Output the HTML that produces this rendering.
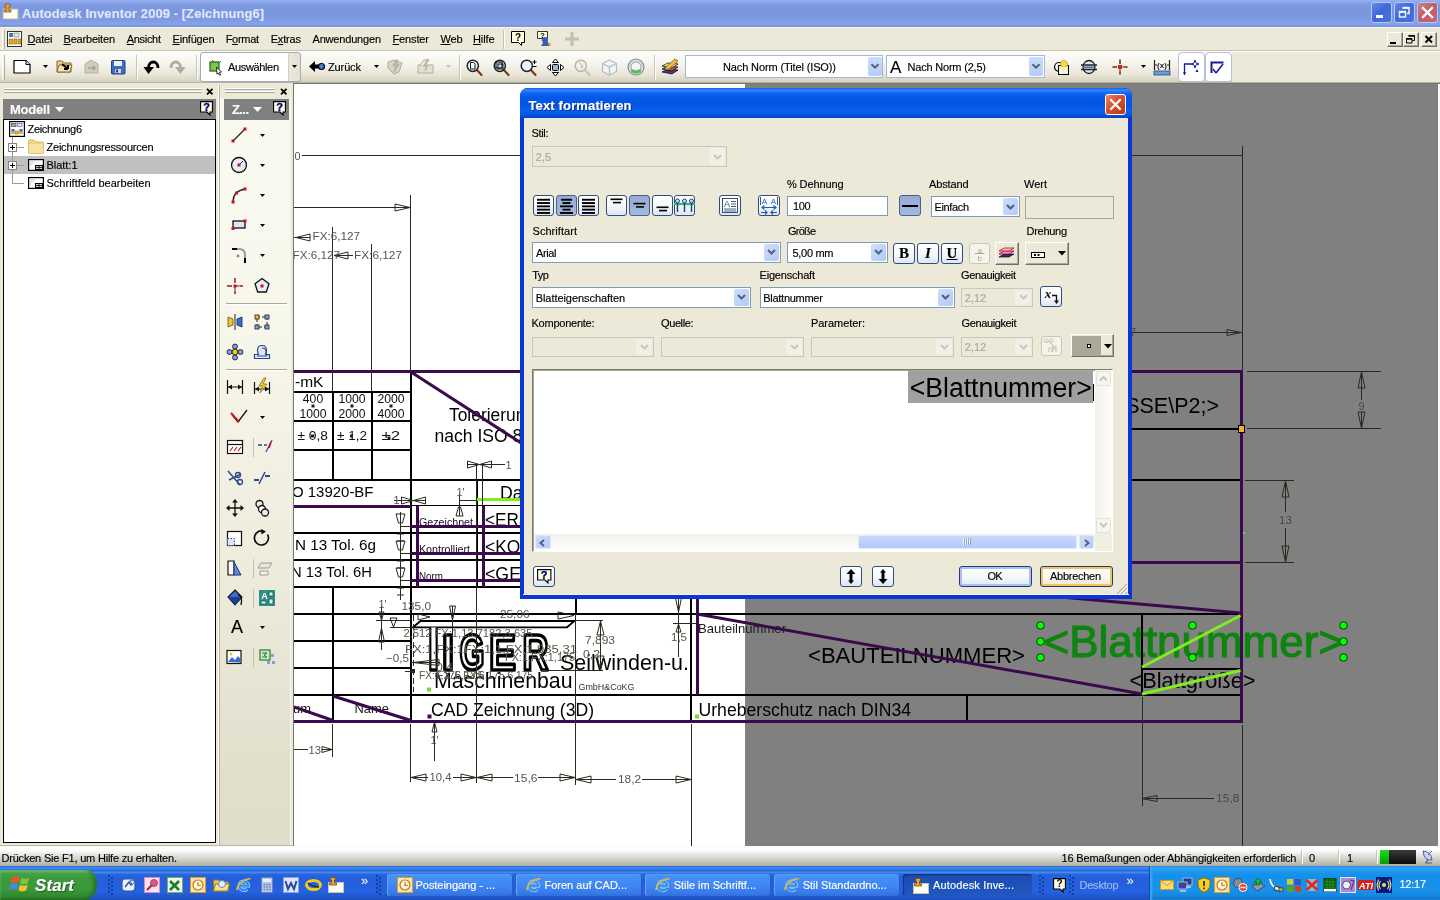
<!DOCTYPE html>
<html lang="de"><head><meta charset="utf-8"><title>Autodesk Inventor 2009 - [Zeichnung6]</title>
<style>
html,body{margin:0;padding:0;}
body{width:1440px;height:900px;overflow:hidden;background:#ece9d8;position:relative;font-family:"Liberation Sans",sans-serif;font-size:11px;}
div,span,svg{position:absolute;display:block;}
#root{left:0;top:0;width:1440px;height:900px;overflow:hidden;will-change:transform;}
.t{white-space:nowrap;-webkit-text-stroke:.15px currentColor;}
u{text-decoration:underline;text-underline-offset:1px;}
svg{overflow:visible;}
svg text{font-family:"Liberation Sans",sans-serif;}
</style></head>
<body>
<div id="root">
<!-- chrome -->
<div style="left:0px;top:0px;width:1440px;height:27px;background:linear-gradient(#98b3ee 0,#8aa6ea 2px,#7b98e1 5px,#7a96df 12px,#7e9ae3 20px,#86a2e9 24px,#7b96dc 26px,#7b96dc 27px);"></div>
<svg style="left:2px;top:3px;" width="18" height="18" viewBox="0 0 18 18"><rect x="1" y="6" width="15" height="10" fill="#fdfdf5" stroke="#b9b39a" stroke-width="1"/><path d="M3 1h5v3h-1v3h2v2h-7v-2h2v-3h-1z" fill="#d9a43c" stroke="#8a5a12" stroke-width=".8"/></svg>
<span class="t" style="left:22px;top:5.30px;font-size:13px;line-height:17px;color:#dfe7fa;letter-spacing:0.061px;font-weight:bold;">Autodesk Inventor 2009 - [Zeichnung6]</span>
<div style="left:1371px;top:2px;width:21px;height:21px;background:linear-gradient(135deg,#6a8ae6 0,#4068d8 45%,#4a74e2 100%);border:1px solid #b4c8f8;border-radius:3px;box-sizing:border-box;"></div>
<div style="left:1394px;top:2px;width:21px;height:21px;background:linear-gradient(135deg,#6a8ae6 0,#4068d8 45%,#4a74e2 100%);border:1px solid #b4c8f8;border-radius:3px;box-sizing:border-box;"></div>
<div style="left:1417px;top:2px;width:21px;height:21px;background:linear-gradient(135deg,#cf8088 0,#bf5c66 50%,#c8687a 100%);border:1px solid #b4c8f8;border-radius:3px;box-sizing:border-box;"></div>
<div style="left:1376px;top:15px;width:7px;height:3px;background:#fff;"></div>
<svg style="left:1394px;top:2px;" width="21" height="21" viewBox="0 0 21 21"><path d="M8.500 5.500h6.500v6h-2" fill="none" stroke="#eef2fd" stroke-width="1.500"/><path d="M8.500 6.200h6.500" stroke="#eef2fd" stroke-width="1.500"/><path d="M5.500 9.500h6v5.500h-6z M5.500 10.200h6" fill="none" stroke="#eef2fd" stroke-width="1.500"/></svg>
<svg style="left:1417px;top:2px;" width="21" height="21" viewBox="0 0 21 21"><path d="M6 6l9 9M15 6l-9 9" stroke="#fff" stroke-width="2.400" stroke-linecap="square"/></svg>
<div style="left:0px;top:27px;width:1440px;height:24px;background:#ece9d8;border-bottom:1px solid #c5c2b2;box-sizing:border-box;"></div>
<div style="left:0px;top:27px;width:1440px;height:1px;background:#f7f6f0;"></div>
<div style="left:2px;top:30px;width:2px;height:19px;border-left:1px solid #fff;border-right:1px solid #b5b19e;box-sizing:border-box;width:3px;"></div>
<svg style="left:7px;top:31px;" width="16" height="16" viewBox="0 0 16 16"><rect x=".5" y=".5" width="14" height="15" fill="#fff" stroke="#333"/><rect x="2" y="2" width="4" height="4" fill="#4a78c8"/><rect x="7" y="2" width="5" height="4" fill="#e8e4d0" stroke="#666" stroke-width=".5"/><rect x="2" y="8" width="4" height="5" fill="#e6a92c" stroke="#7a5a10" stroke-width=".5"/><rect x="7" y="8" width="3" height="5" fill="#e6a92c" stroke="#7a5a10" stroke-width=".5"/><rect x="11" y="8" width="3" height="5" fill="#e6a92c" stroke="#7a5a10" stroke-width=".5"/></svg>
<span class="t" style="left:27.5px;top:31.80px;font-size:11px;line-height:15px;color:#000;letter-spacing:-0.170px;"><u>D</u>atei</span>
<span class="t" style="left:63.5px;top:31.80px;font-size:11px;line-height:15px;color:#000;letter-spacing:-0.190px;"><u>B</u>earbeiten</span>
<span class="t" style="left:126.7px;top:31.80px;font-size:11px;line-height:15px;color:#000;letter-spacing:-0.295px;"><u>A</u>nsicht</span>
<span class="t" style="left:172.5px;top:31.80px;font-size:11px;line-height:15px;color:#000;letter-spacing:-0.204px;"><u>E</u>infügen</span>
<span class="t" style="left:225.7px;top:31.80px;font-size:11px;line-height:15px;color:#000;letter-spacing:-0.307px;">F<u>o</u>rmat</span>
<span class="t" style="left:270.7px;top:31.80px;font-size:11px;line-height:15px;color:#000;letter-spacing:-0.175px;">E<u>x</u>tras</span>
<span class="t" style="left:312.5px;top:31.80px;font-size:11px;line-height:15px;color:#000;letter-spacing:-0.184px;">Anwendun<u>g</u>en</span>
<span class="t" style="left:392.5px;top:31.80px;font-size:11px;line-height:15px;color:#000;letter-spacing:-0.132px;"><u>F</u>enster</span>
<span class="t" style="left:440.5px;top:31.80px;font-size:11px;line-height:15px;color:#000;letter-spacing:-0.210px;"><u>W</u>eb</span>
<span class="t" style="left:473px;top:31.80px;font-size:11px;line-height:15px;color:#000;letter-spacing:-0.126px;"><u>H</u>ilfe</span>
<div style="left:503px;top:30px;width:1px;height:19px;background:#c5c2b2;border-right:1px solid #fff;"></div>
<svg style="left:510px;top:30px;" width="18" height="18" viewBox="0 0 18 18"><path d="M1.500 1.500h13v11h-3v3l-3-3h-7z" fill="#ffffe1" stroke="#000" stroke-width="1"/><text x="8" y="11" font-size="10" font-weight="bold" text-anchor="middle" font-family="Liberation Sans,sans-serif" fill="#000">?</text></svg>
<svg style="left:536px;top:30px;" width="18" height="18" viewBox="0 0 18 18"><path d="M1.500 1.500h10v7h-10z" fill="#ffffe1" stroke="#333" stroke-width="1"/><text x="6.500" y="8" font-size="8" font-weight="bold" text-anchor="middle" font-family="Liberation Sans,sans-serif" fill="#000">?</text><circle cx="9" cy="10" r="3" fill="#3a5fb0"/><path d="M5 16l3-5 4 1 2 4z" fill="#3a5fb0"/><circle cx="14" cy="14" r="1.500" fill="#f0c040"/></svg>
<svg style="left:564px;top:31px;" width="16" height="16" viewBox="0 0 16 16"><path d="M6.500 1h3v5.500h5.500v3h-5.500v5.500h-3v-5.500h-5.500v-3h5.500z" fill="#c3c0b0"/></svg>
<div style="left:1387px;top:32px;width:15.5px;height:14.5px;background:#ece9d8;border:1px solid;border-color:#fff #716f64 #716f64 #fff;box-sizing:border-box;box-shadow:inset -1px -1px 0 #aca899;"></div>
<div style="left:1403px;top:32px;width:15.5px;height:14.5px;background:#ece9d8;border:1px solid;border-color:#fff #716f64 #716f64 #fff;box-sizing:border-box;box-shadow:inset -1px -1px 0 #aca899;"></div>
<div style="left:1421px;top:32px;width:16px;height:14.5px;background:#ece9d8;border:1px solid;border-color:#fff #716f64 #716f64 #fff;box-sizing:border-box;box-shadow:inset -1px -1px 0 #aca899;"></div>
<div style="left:1390px;top:41.5px;width:6px;height:2px;background:#000;"></div>
<svg style="left:1403px;top:32px;" width="16" height="15" viewBox="0 0 16 15"><path d="M5.500 3.500h6v5h-2" fill="none" stroke="#000" stroke-width="1"/><path d="M5.500 4h6" stroke="#000" stroke-width="1.500"/><path d="M3.500 6.500h5.500v4.500h-5.500z" fill="#ece9d8" stroke="#000" stroke-width="1"/><path d="M3.500 7h5.500" stroke="#000" stroke-width="1.500"/></svg>
<svg style="left:1421px;top:32px;" width="16" height="15" viewBox="0 0 16 15"><path d="M4.500 4l6.500 6.500M11 4l-6.500 6.500" stroke="#000" stroke-width="2"/></svg>
<div style="left:0px;top:51px;width:1440px;height:33px;background:#ece9d8;"></div>
<div style="left:0px;top:51px;width:1232px;height:31px;background:linear-gradient(#fdfdfb 0,#f6f5ee 40%,#e8e5d6 78%,#d4d0bb 100%);"></div>
<div style="left:0px;top:82px;width:1440px;height:1px;background:#b5b2a0;"></div>
<div style="left:0px;top:51px;width:1440px;height:1px;background:#fff;"></div>
<div style="left:2px;top:55px;width:3px;height:25px;border-left:1px solid #fff;border-right:1px solid #b5b19e;box-sizing:border-box;"></div>
<!-- toolbar -->
<svg style="left:13px;top:60px;" width="18" height="14" viewBox="0 0 18 14"><path d="M1 .5h12l4 4v8.500h-16z" fill="#fff" stroke="#000" stroke-width="1.200"/><path d="M13 .5v4h4" fill="#d8d8e8" stroke="#000" stroke-width="1"/></svg>
<svg style="left:43px;top:65px;" width="5" height="3" viewBox="0 0 5 3"><path d="M0 0h5l-2.5 3z" fill="#000"/></svg>
<svg style="left:56px;top:58px;" width="18" height="17" viewBox="0 0 18 17"><path d="M1 3h5l2 2h7v9h-14z" fill="#e9cf8d" stroke="#8a6a2a" stroke-width="1"/><path d="M3 7h13l-2 7h-13z" fill="#f4e2ae" stroke="#8a6a2a" stroke-width="1"/><path d="M6 6l6 5m0 0v-4m0 4h-4" stroke="#000" stroke-width="2" fill="none"/></svg>
<svg style="left:84px;top:59px;" width="15" height="15" viewBox="0 0 15 15"><path d="M1 5l6-4 7 4v9h-13z" fill="#cfccbd" stroke="#b4b1a2"/><path d="M4 9h7l-2-2m2 2l-2 2" stroke="#a5a293" stroke-width="1.500" fill="none"/></svg>
<svg style="left:111px;top:60px;" width="15" height="15" viewBox="0 0 15 15"><rect x=".5" y=".5" width="13.500" height="13.500" rx="1" fill="#3b6fc4" stroke="#1f3f86"/><rect x="3" y="1" width="8" height="5" fill="#e9f0fb"/><rect x="3.500" y="8.500" width="7" height="5" fill="#c8d6ee" stroke="#1f3f86" stroke-width=".6"/><rect x="5" y="9.500" width="2" height="3" fill="#1f3f86"/></svg>
<div style="left:136px;top:55px;width:1px;height:25px;background:#c9c5b4;border-right:1px solid #fff;"></div>
<svg style="left:143px;top:59px;" width="17" height="16" viewBox="0 0 17 16"><path d="M15 9c0-8-9.500-8-9.500 0" fill="none" stroke="#000" stroke-width="2.800"/><path d="M.5 8h10.500l-5.500 7z" fill="#000"/></svg>
<svg style="left:169px;top:59px;" width="17" height="16" viewBox="0 0 17 16"><path d="M2 9c0-8 9.500-8 9.500 0" fill="none" stroke="#b0ad9f" stroke-width="2.800"/><path d="M16.500 8h-10.500l5.500 7z" fill="#b0ad9f"/></svg>
<div style="left:196px;top:55px;width:1px;height:25px;background:#c9c5b4;border-right:1px solid #fff;"></div>
<div style="left:200px;top:52px;width:101px;height:30px;background:linear-gradient(90deg,#fff 0,#fff 87px,#eae8dc 88px,#e4e1d4 100%);border:1px solid #a3abba;border-radius:3px;box-sizing:border-box;"></div>
<div style="left:288px;top:54px;width:1px;height:27px;background:#d2cfbf;"></div>
<svg style="left:209px;top:59px;" width="14" height="17" viewBox="0 0 14 17"><rect x="1" y="3" width="9" height="9" fill="#79c94a" stroke="#2b5e12" stroke-width="1.200"/><path d="M3 1l2 2M12 2l-2 2" stroke="#555" stroke-width="1"/><path d="M7.500 8l5 5-2 .3 1.200 2.400-1.200 .6-1.200-2.400-1.300 1.300z" fill="#fff" stroke="#000" stroke-width=".8"/></svg>
<span class="t" style="left:228px;top:59.80px;font-size:11px;line-height:15px;color:#000;letter-spacing:-0.352px;">Auswählen</span>
<svg style="left:292px;top:65px;" width="5" height="3" viewBox="0 0 5 3"><path d="M0 0h5l-2.5 3z" fill="#000"/></svg>
<svg style="left:309px;top:60px;" width="17" height="13" viewBox="0 0 17 13"><path d="M0 6.500l6-5.500v3.500h5v4h-5v3.500z" fill="#000"/><circle cx="12.500" cy="6.500" r="3" fill="#4a7fd8" stroke="#000" stroke-width="1.200"/></svg>
<span class="t" style="left:328px;top:59.80px;font-size:11px;line-height:15px;color:#000;letter-spacing:-0.124px;">Zurück</span>
<svg style="left:374px;top:65px;" width="5" height="3" viewBox="0 0 5 3"><path d="M0 0h5l-2.5 3z" fill="#000"/></svg>
<svg style="left:387px;top:58px;" width="16" height="17" viewBox="0 0 16 17"><path d="M1 4l6-2 8 3-3 9-5 2-6-6z" fill="#d8d5c7" stroke="#aeab9c"/><path d="M9 2l-3 6h3l-2 6 5-8h-3l2-4z" fill="#c2bfb0" stroke="#a3a091" stroke-width=".7"/></svg>
<svg style="left:417px;top:58px;" width="18" height="17" viewBox="0 0 18 17"><path d="M1 7h15v8h-15z" fill="#e4e1d3" stroke="#b1ae9f"/><path d="M3 7l4-5h5l-4 5" fill="#efede3" stroke="#b1ae9f"/><path d="M11 1l-4 7h3l-2 5" fill="none" stroke="#b1ae9f" stroke-width="1.200"/></svg>
<svg style="left:446px;top:65px;" width="5" height="3" viewBox="0 0 5 3"><path d="M0 0h5l-2.5 3z" fill="#c6c3b3"/></svg>
<div style="left:459px;top:55px;width:1px;height:25px;background:#c9c5b4;border-right:1px solid #fff;"></div>
<svg style="left:466px;top:59px;" width="18" height="18" viewBox="0 0 18 18"><path d="M10.500 10.500l5 5.500" stroke="#7a3a1a" stroke-width="2.200" stroke-linecap="round"/><circle cx="6.800" cy="6.800" r="5.600" fill="#e9f1fb" stroke="#222" stroke-width="1.500"/><path d="M4.500 3.500h3l1.500 1.500v5h-4.500z" fill="#fff" stroke="#000" stroke-width=".9"/></svg>
<svg style="left:493px;top:59px;" width="18" height="18" viewBox="0 0 18 18"><path d="M10.500 10.500l5 5.500" stroke="#7a3a1a" stroke-width="2.200" stroke-linecap="round"/><circle cx="6.800" cy="6.800" r="5.600" fill="#e9f1fb" stroke="#222" stroke-width="1.500"/><rect x="3" y="3" width="6" height="6" fill="#cfe0f5" stroke="#000" stroke-width="1"/><rect x="5" y="5" width="5" height="5" fill="none" stroke="#000" stroke-width=".9"/></svg>
<svg style="left:520px;top:59px;" width="18" height="18" viewBox="0 0 18 18"><path d="M10.500 10.500l5 5.500" stroke="#7a3a1a" stroke-width="2.200" stroke-linecap="round"/><circle cx="6.800" cy="6.800" r="5.600" fill="#e9f1fb" stroke="#222" stroke-width="1.500"/><path d="M12.500 3h4m-2-2v4M12.500 7.500h4" stroke="#000" stroke-width="1" fill="none"/></svg>
<svg style="left:547px;top:59px;" width="17" height="17" viewBox="0 0 17 17"><path d="M8.500 0l3 3.500h-6zM8.500 17l3-3.500h-6zM0 8.500l3.500-3v6zM17 8.500l-3.500-3v6z" fill="#fff" stroke="#000" stroke-width="1"/><rect x="5.500" y="5.500" width="6" height="6" rx="1" fill="#9fb7dd" stroke="#000" stroke-width="1"/></svg>
<svg style="left:574px;top:59px;" width="18" height="18" viewBox="0 0 18 18"><path d="M10.500 10.500l5 5.500" stroke="#c9c6b6" stroke-width="2.200" stroke-linecap="round"/><circle cx="6.800" cy="6.800" r="5.600" fill="#f1f0e8" stroke="#b9b6a6" stroke-width="1.500"/><path d="M5 3.500l4 4-2 .2 1 2" fill="none" stroke="#b9b6a6" stroke-width="1"/></svg>
<svg style="left:601px;top:59px;" width="17" height="17" viewBox="0 0 17 17"><path d="M8.500 1l7 3.500v8l-7 3.500-7-3.500v-8z" fill="#f2f4f6" stroke="#b4bcc4" stroke-width="1.200"/><path d="M1.500 4.500l7 3.500 7-3.500M8.500 8v8" fill="none" stroke="#b4bcc4" stroke-width="1.200"/></svg>
<svg style="left:627px;top:58px;" width="18" height="18" viewBox="0 0 18 18"><circle cx="9" cy="9" r="8" fill="#d4d8dc" stroke="#8b9096" stroke-width="1.200"/><circle cx="9" cy="9" r="5" fill="#f6f6f6" stroke="#a0a4a8"/><path d="M3.500 13a7 7 0 0 0 11 0l-2.500-2a4 4 0 0 1-6 0z" fill="#58c05a"/></svg>
<div style="left:654px;top:55px;width:1px;height:25px;background:#c9c5b4;border-right:1px solid #fff;"></div>
<svg style="left:661px;top:58px;" width="18" height="18" viewBox="0 0 18 18"><path d="M1 14l6-3 10 1-6 4z" fill="#3a3f8f" stroke="#111" stroke-width=".8"/><path d="M1 11l6-3 10 1-6 4z" fill="#e04a2a" stroke="#111" stroke-width=".8"/><path d="M1 8l6-3 10 1-6 4z" fill="#f2e9c8" stroke="#111" stroke-width=".8"/><path d="M5 9l9-8 3 2-9 8-4 1z" fill="#f3c23a" stroke="#7a5a10" stroke-width=".8"/></svg>
<div style="left:685px;top:55px;width:198px;height:23px;background:#fff;border:1px solid #a5b7d3;box-sizing:border-box;"></div>
<span class="t" style="left:723px;top:59.80px;font-size:11px;line-height:15px;color:#000;letter-spacing:-0.123px;">Nach Norm (Titel (ISO))</span>
<div style="left:868px;top:57px;width:14px;height:19px;background:linear-gradient(#cbdcfb,#b7cdf6);border-radius:2px;"></div>
<svg style="left:870px;top:63px;" width="10" height="7" viewBox="0 0 10 7"><path d="M1.500 1.200l3.500 3.500 3.500-3.500" fill="none" stroke="#4d6185" stroke-width="2"/></svg>
<div style="left:886px;top:55px;width:159px;height:23px;background:#fff;border:1px solid #a5b7d3;box-sizing:border-box;"></div>
<span class="t" style="left:890px;top:57.30px;font-size:17px;line-height:21px;color:#000;">A</span>
<span class="t" style="left:907.5px;top:59.80px;font-size:11px;line-height:15px;color:#000;letter-spacing:-0.200px;">Nach Norm (2,5)</span>
<div style="left:1029px;top:57px;width:14px;height:19px;background:linear-gradient(#cbdcfb,#b7cdf6);border-radius:2px;"></div>
<svg style="left:1031px;top:63px;" width="10" height="7" viewBox="0 0 10 7"><path d="M1.500 1.200l3.500 3.500 3.500-3.500" fill="none" stroke="#4d6185" stroke-width="2"/></svg>
<svg style="left:1053px;top:59px;" width="17" height="17" viewBox="0 0 17 17"><circle cx="6" cy="8" r="4.500" fill="none" stroke="#000" stroke-width="1.200"/><rect x="5.500" y="6.500" width="10" height="9" fill="#f5f1e0" stroke="#000" stroke-width="1"/><circle cx="11" cy="5" r="3.500" fill="#fbd84a" stroke="#caa21a" stroke-width=".8"/><rect x="9" y="8" width="4" height="3" fill="#fff3b0"/></svg>
<svg style="left:1080px;top:59px;" width="18" height="17" viewBox="0 0 18 17"><ellipse cx="9" cy="8" rx="6" ry="6.500" fill="#dfe4ea" stroke="#222" stroke-width="1.300"/><path d="M1 6h16M1 10.500h16" stroke="#222" stroke-width="1.400"/><path d="M4 8.200h10" stroke="#3a5fb0" stroke-width="1.400"/></svg>
<svg style="left:1111px;top:58px;" width="18" height="18" viewBox="0 0 18 18"><path d="M9 1v16M1 9h16" stroke="#d03020" stroke-width="1" stroke-dasharray="5 2 4 2 5"/><path d="M9 2v4M9 12v4M2 9h4M12 9h4" stroke="#222" stroke-width="1"/><rect x="7" y="7" width="4" height="4" fill="#d81e10"/></svg>
<svg style="left:1141px;top:65px;" width="5" height="3" viewBox="0 0 5 3"><path d="M0 0h5l-2.5 3z" fill="#000"/></svg>
<svg style="left:1153px;top:59px;" width="18" height="17" viewBox="0 0 18 17"><path d="M1.500 1v10M16.500 1v10M4 6h-2.500M14 6h2.500" stroke="#222" stroke-width="1.200"/><text x="9" y="9" font-size="8" font-weight="bold" text-anchor="middle" fill="#222">(x)</text><rect x="1" y="12" width="16" height="4" fill="#6c9bd8" stroke="#27467c" stroke-width=".8"/></svg>
<div style="left:1178px;top:52px;width:27px;height:30px;background:#fff;border:1px solid #b4c0d6;border-radius:4px;box-sizing:border-box;"></div>
<div style="left:1205px;top:52px;width:27px;height:30px;background:#fff;border:1px solid #b4c0d6;border-radius:4px;box-sizing:border-box;"></div>
<svg style="left:1182px;top:59px;" width="18" height="17" viewBox="0 0 18 17"><path d="M2.500 16v-11h7" fill="none" stroke="#1a1aa0" stroke-width="1.300"/><path d="M13 1l1 3 3 1-3 1-1 3-1-3-3-1 3-1z" fill="#fff" stroke="#1a1aa0" stroke-width="1"/><path d="M2.500 16l-1.500-3h3zM15 10l1.500 3h-3z" fill="#1a1aa0"/></svg>
<svg style="left:1209px;top:59px;" width="18" height="17" viewBox="0 0 18 17"><path d="M2.500 14v-10.500h12" fill="none" stroke="#1a1aa0" stroke-width="2"/><path d="M14 5l-7 9M7 14l-3-4" fill="none" stroke="#1a1aa0" stroke-width="1.600"/></svg>
<!-- panels -->
<div style="left:0px;top:83px;width:294px;height:764px;background:#ece9d8;"></div>
<div style="left:4px;top:88px;width:198px;height:2px;border-top:1px solid #fff;border-bottom:1px solid #aca899;box-sizing:border-box;background:#ece9d8;"></div>
<div style="left:4px;top:91px;width:198px;height:2px;border-top:1px solid #fff;border-bottom:1px solid #aca899;box-sizing:border-box;background:#ece9d8;"></div>
<svg style="left:206px;top:88px;" width="8" height="7" viewBox="0 0 8 7"><path d="M1 .8l5.500 5.500M6.500 .8l-5.500 5.500" stroke="#000" stroke-width="1.800"/></svg>
<div style="left:218px;top:85px;width:1px;height:761px;background:#fff;"></div>
<div style="left:219px;top:85px;width:1px;height:761px;background:#b5b2a0;"></div>
<div style="left:3px;top:99px;width:213px;height:21px;background:#808080;"></div>
<span class="t" style="left:10px;top:101.30px;font-size:13px;line-height:17px;color:#fff;letter-spacing:-0.233px;font-weight:bold;">Modell</span>
<svg style="left:55px;top:107px;" width="9" height="5" viewBox="0 0 9 5"><path d="M0 0h9l-4.500 5z" fill="#fff"/></svg>
<svg style="left:199.5px;top:101px;" width="13" height="15" viewBox="0 0 13 15"><path d="M.6 .6h11.800v10.400h-2.400v3l-3-3h-6.400z" fill="#ffffe1" stroke="#000" stroke-width="1.100"/><text x="6.500" y="9.800" font-size="11" font-weight="bold" text-anchor="middle" fill="#00007b" stroke="#00007b" stroke-width=".4">?</text></svg>
<div style="left:3px;top:119px;width:213px;height:724px;background:#fff;border:1px solid #000;box-sizing:border-box;"></div>
<div style="left:4px;top:156px;width:211px;height:18px;background:#c0c0c0;"></div>
<div style="left:12px;top:137px;width:1px;height:46px;background:#9a9a9a;"></div>
<div style="left:12px;top:147px;width:12px;height:1px;background:#9a9a9a;"></div>
<div style="left:12px;top:165px;width:12px;height:1px;background:#9a9a9a;"></div>
<div style="left:12px;top:183px;width:12px;height:1px;background:#9a9a9a;"></div>
<svg style="left:8px;top:142.5px;" width="9" height="9" viewBox="0 0 9 9"><rect x=".5" y=".5" width="8" height="8" fill="#fff" stroke="#848484"/><path d="M2 4.500h5M4.500 2v5" stroke="#000" stroke-width="1"/></svg>
<svg style="left:8px;top:160.5px;" width="9" height="9" viewBox="0 0 9 9"><rect x=".5" y=".5" width="8" height="8" fill="#fff" stroke="#848484"/><path d="M2 4.500h5M4.500 2v5" stroke="#000" stroke-width="1"/></svg>
<svg style="left:9px;top:121px;" width="16" height="16" viewBox="0 0 16 16"><rect x=".6" y=".6" width="14.800" height="14.800" fill="#fff" stroke="#000" stroke-width="1.200"/><rect x="2.500" y="2.500" width="4.500" height="3" fill="#c8a05a" stroke="#3b5c9a" stroke-width=".8"/><rect x="8.500" y="2.500" width="4.500" height="3" fill="#e9e6d6" stroke="#3b5c9a" stroke-width=".6"/><rect x="2.500" y="8" width="3" height="5" fill="#3d6cc0"/><rect x="6.500" y="10" width="3" height="3" fill="#f0b428" stroke="#8a6a10" stroke-width=".5"/><rect x="10.500" y="8" width="3" height="5" fill="#3d6cc0"/><rect x="10.500" y="10.500" width="3" height="2.500" fill="#f0b428"/><rect x="2.500" y="10.500" width="3" height="2.500" fill="#f0b428"/></svg>
<svg style="left:28px;top:139px;" width="16" height="15" viewBox="0 0 16 15"><path d="M.5 2.500q0-1.500 1.500-1.500h4l1.500 2h7q1 0 1 1v9.500q0 1-1 1h-13q-1 0-1-1z" fill="#f0d388" stroke="#d9b964" stroke-width="1"/><path d="M.8 5h14.400v8.500q0 .8-.8 .8h-12.800q-.8 0-.8-.8z" fill="#f7e2a6"/></svg>
<svg style="left:28px;top:159px;" width="16" height="12" viewBox="0 0 16 12"><rect x=".6" y=".6" width="14.800" height="10.800" fill="#fff" stroke="#000" stroke-width="1.200"/><path d="M2 8l6-6h-6z" fill="#dfe6f0"/><rect x="7.500" y="6.500" width="7" height="4" fill="#d8d8d8" stroke="#000" stroke-width="1"/><path d="M7.500 8.500h7M11 6.500v4" stroke="#000" stroke-width=".8"/></svg>
<svg style="left:28px;top:177px;" width="16" height="12" viewBox="0 0 16 12"><rect x=".6" y=".6" width="14.800" height="10.800" fill="#fff" stroke="#000" stroke-width="1.200"/><path d="M2 8l6-6h-6z" fill="#dfe6f0"/><rect x="7.500" y="6.500" width="7" height="4" fill="#d8d8d8" stroke="#000" stroke-width="1"/><path d="M7.500 8.500h7M11 6.500v4" stroke="#000" stroke-width=".8"/></svg>
<span class="t" style="left:27.5px;top:121.80px;font-size:11px;line-height:15px;color:#000;letter-spacing:-0.332px;">Zeichnung6</span>
<span class="t" style="left:46.5px;top:139.80px;font-size:11px;line-height:15px;color:#000;letter-spacing:-0.225px;">Zeichnungsressourcen</span>
<span class="t" style="left:46.5px;top:157.80px;font-size:11px;line-height:15px;color:#000;letter-spacing:-0.031px;">Blatt:1</span>
<span class="t" style="left:46.5px;top:175.80px;font-size:11px;line-height:15px;color:#000;letter-spacing:0.002px;">Schriftfeld bearbeiten</span>
<div style="left:220px;top:85px;width:71px;height:761px;background:linear-gradient(#fbfaf1 0,#f8f7ec 30%,#efedde 60%,#e2dfcd 90%,#e0ddcb 100%);"></div>
<div style="left:220px;top:85px;width:71px;height:14px;background:#ece9d8;"></div>
<div style="left:290px;top:84px;width:3px;height:762px;background:#ece9d8;border-left:1px solid #f4f3ec;box-sizing:border-box;"></div>
<div style="left:225px;top:88px;width:50px;height:2px;border-top:1px solid #fff;border-bottom:1px solid #aca899;box-sizing:border-box;background:#ece9d8;"></div>
<div style="left:225px;top:91px;width:50px;height:2px;border-top:1px solid #fff;border-bottom:1px solid #aca899;box-sizing:border-box;background:#ece9d8;"></div>
<svg style="left:279.5px;top:88px;" width="8" height="7" viewBox="0 0 8 7"><path d="M1 .8l5.500 5.500M6.500 .8l-5.500 5.500" stroke="#000" stroke-width="1.800"/></svg>
<div style="left:224px;top:99px;width:65px;height:21px;background:#808080;"></div>
<span class="t" style="left:232px;top:101.30px;font-size:13px;line-height:17px;color:#fff;letter-spacing:-0.592px;font-weight:bold;">Z...</span>
<svg style="left:253px;top:107px;" width="9" height="5" viewBox="0 0 9 5"><path d="M0 0h9l-4.500 5z" fill="#fff"/></svg>
<svg style="left:272.5px;top:101px;" width="13" height="15" viewBox="0 0 13 15"><path d="M.6 .6h11.800v10.400h-2.400v3l-3-3h-6.400z" fill="#ffffe1" stroke="#000" stroke-width="1.100"/><text x="6.500" y="9.800" font-size="11" font-weight="bold" text-anchor="middle" fill="#00007b" stroke="#00007b" stroke-width=".4">?</text></svg>
<svg style="left:230px;top:126px;" width="18" height="18" viewBox="0 0 18 18"><path d="M3 15l12-12" stroke="#222" stroke-width="1.300"/><rect x="1.5" y="13.5" width="3" height="3" fill="#c8161d"/><rect x="13.5" y="1.5" width="3" height="3" fill="#c8161d"/></svg>
<svg style="left:260px;top:133.5px;" width="5" height="3" viewBox="0 0 5 3"><path d="M0 0h5l-2.5 3z" fill="#000"/></svg>
<svg style="left:230px;top:156px;" width="18" height="18" viewBox="0 0 18 18"><circle cx="9" cy="9" r="7.500" fill="#e7edf8" stroke="#111" stroke-width="1.300"/><path d="M9 9l4-4" stroke="#222" stroke-width="1"/><rect x="7.5" y="7.5" width="3" height="3" fill="#c8161d"/></svg>
<svg style="left:260px;top:163.5px;" width="5" height="3" viewBox="0 0 5 3"><path d="M0 0h5l-2.5 3z" fill="#000"/></svg>
<svg style="left:230px;top:186px;" width="18" height="18" viewBox="0 0 18 18"><path d="M3 16q0-11 12-13" fill="none" stroke="#222" stroke-width="1.300"/><rect x="1.5" y="14.5" width="3" height="3" fill="#c8161d"/><rect x="5" y="5.5" width="3" height="3" fill="#c8161d"/><rect x="13.5" y="1.5" width="3" height="3" fill="#c8161d"/></svg>
<svg style="left:260px;top:193.5px;" width="5" height="3" viewBox="0 0 5 3"><path d="M0 0h5l-2.5 3z" fill="#000"/></svg>
<svg style="left:230px;top:216px;" width="18" height="18" viewBox="0 0 18 18"><rect x="3" y="5" width="12" height="7" fill="#dfe5f3" stroke="#111" stroke-width="1.300"/><rect x="1.5" y="11" width="3" height="3" fill="#c8161d"/><rect x="13.5" y="3.5" width="3" height="3" fill="#c8161d"/></svg>
<svg style="left:260px;top:223.5px;" width="5" height="3" viewBox="0 0 5 3"><path d="M0 0h5l-2.5 3z" fill="#000"/></svg>
<svg style="left:230px;top:246px;" width="18" height="18" viewBox="0 0 18 18"><path d="M2 3h7q6 0 6 6v7" fill="none" stroke="#9a9a9a" stroke-width="2"/><path d="M2 3h5M15 12v5" stroke="#000" stroke-width="2"/><path d="M8 8.500v3M6.500 10h3" stroke="#c8161d" stroke-width=".8"/></svg>
<svg style="left:260px;top:253.5px;" width="5" height="3" viewBox="0 0 5 3"><path d="M0 0h5l-2.5 3z" fill="#000"/></svg>
<svg style="left:226px;top:277px;" width="18" height="18" viewBox="0 0 18 18"><path d="M9 1v16M1 9h16" stroke="#222" stroke-width="1" stroke-dasharray="5 2 4 2 5"/><path d="M9 1v5M9 12v5M1 9h5M12 9h5" stroke="#c8161d" stroke-width="1"/><rect x="7.5" y="7.5" width="3" height="3" fill="#c8161d"/></svg>
<svg style="left:253px;top:277px;" width="18" height="18" viewBox="0 0 18 18"><path d="M9 1.500l7 5.200-2.700 8.300h-8.600l-2.700-8.300z" fill="#e7edf8" stroke="#111" stroke-width="1.300"/><rect x="7.5" y="7.5" width="3" height="3" fill="#c8161d"/></svg>
<div style="left:226px;top:303px;width:61px;height:2px;border-top:1px solid #aca899;border-bottom:1px solid #fff;box-sizing:border-box;"></div>
<svg style="left:226px;top:313px;" width="18" height="18" viewBox="0 0 18 18"><path d="M9 1v16" stroke="#222" stroke-width="1"/><path d="M2 4l5 2v6l-5 2z" fill="#f3c22b" stroke="#6b5310" stroke-width=".8"/><path d="M16 4l-5 2v6l5 2z" fill="#3c6bc7" stroke="#10285e" stroke-width=".8"/></svg>
<svg style="left:253px;top:313px;" width="18" height="18" viewBox="0 0 18 18"><path d="M4 4h10v10h-10z" fill="none" stroke="#222" stroke-width="1" stroke-dasharray="3 2"/><rect x="2" y="2" width="4" height="4" fill="#f3c22b" stroke="#222" stroke-width=".8"/><rect x="12" y="2" width="4" height="4" fill="#7da0dc" stroke="#222" stroke-width=".8"/><rect x="2" y="12" width="4" height="4" fill="#7da0dc" stroke="#222" stroke-width=".8"/><rect x="12" y="12" width="4" height="4" fill="#7da0dc" stroke="#222" stroke-width=".8"/></svg>
<svg style="left:226px;top:343px;" width="18" height="18" viewBox="0 0 18 18"><circle cx="9" cy="9" r="3" fill="#f3c22b" stroke="#222" stroke-width=".9"/><circle cx="9" cy="3.500" r="2.500" fill="#7da0dc" stroke="#222" stroke-width=".9"/><circle cx="9" cy="14.500" r="2.500" fill="#7da0dc" stroke="#222" stroke-width=".9"/><circle cx="3.500" cy="9" r="2.500" fill="#7da0dc" stroke="#222" stroke-width=".9"/><circle cx="14.500" cy="9" r="2.500" fill="#7da0dc" stroke="#222" stroke-width=".9"/></svg>
<svg style="left:253px;top:343px;" width="18" height="18" viewBox="0 0 18 18"><path d="M1.500 15.500v-4h4q-1-2-1-4 0-5 4.500-5t4.500 5q0 2-1 4h4v4z" fill="#e0e8f6" stroke="#2a4a8c" stroke-width="1.200"/><path d="M4 13h10q-1-2.500-1-5 0-3-4-3" fill="none" stroke="#2a4a8c" stroke-width="1"/></svg>
<div style="left:226px;top:369px;width:61px;height:2px;border-top:1px solid #aca899;border-bottom:1px solid #fff;box-sizing:border-box;"></div>
<svg style="left:226px;top:378px;" width="18" height="18" viewBox="0 0 18 18"><path d="M1.500 2v14M16.500 2v14M2 9h14" stroke="#111" stroke-width="1.200"/><path d="M2 9l4-2.500v5zM16 9l-4-2.500v5z" fill="#111"/></svg>
<svg style="left:253px;top:378px;" width="18" height="18" viewBox="0 0 18 18"><path d="M1.500 4v12M16.500 4v12M2 11h14" stroke="#111" stroke-width="1.200"/><path d="M2 11l4-2.500v5zM16 11l-4-2.500v5z" fill="#111"/><path d="M11 0l-5 8h3.500l-2.500 7 7-9h-4l3-6z" fill="#f6d328" stroke="#7a5a10" stroke-width=".7"/></svg>
<svg style="left:230px;top:408px;" width="18" height="18" viewBox="0 0 18 18"><path d="M3 8l5 6 9-12" fill="none" stroke="#111" stroke-width="1.300"/><path d="M1 5l8 9" stroke="#c8161d" stroke-width="2"/></svg>
<svg style="left:260px;top:416px;" width="5" height="3" viewBox="0 0 5 3"><path d="M0 0h5l-2.5 3z" fill="#000"/></svg>
<svg style="left:226px;top:438px;" width="18" height="18" viewBox="0 0 18 18"><rect x="1.500" y="2.500" width="15" height="13" fill="#fff" stroke="#111" stroke-width="1.200"/><path d="M1.500 6.500h15" stroke="#111" stroke-width="1.200"/><path d="M4 13l3-4M8 13l3-4M12 13l3-4" stroke="#c8161d" stroke-width="1.200"/></svg>
<div style="left:253px;top:438px;width:1px;height:19px;background:#c5c1ae;"></div>
<svg style="left:257px;top:438px;" width="18" height="18" viewBox="0 0 18 18"><path d="M1 7h4M7 7h3" stroke="#2a4a8c" stroke-width="1.600"/><path d="M9 14l6-12" stroke="#3c6bc7" stroke-width="1.600"/><path d="M14 4l-2 6" stroke="#c8161d" stroke-width="1.600"/></svg>
<svg style="left:226px;top:469px;" width="18" height="18" viewBox="0 0 18 18"><path d="M2 2l12 14M15 5l-12 6" stroke="#2a4a8c" stroke-width="1.500"/><circle cx="12" cy="6" r="2.500" fill="none" stroke="#2a4a8c" stroke-width="1.300"/><circle cx="14" cy="13" r="2.500" fill="none" stroke="#2a4a8c" stroke-width="1.300"/></svg>
<svg style="left:253px;top:469px;" width="18" height="18" viewBox="0 0 18 18"><path d="M1 11h5M12 7h5" stroke="#2a4a8c" stroke-width="1.800"/><path d="M6 15l6-12" stroke="#2a4a8c" stroke-width="1.500"/></svg>
<svg style="left:226px;top:499px;" width="18" height="18" viewBox="0 0 18 18"><path d="M9 0l3 3.500h-6zM9 18l3-3.500h-6zM0 9l3.500-3v6zM18 9l-3.500-3v6z" fill="#111"/><path d="M9 3v12M3 9h12" stroke="#111" stroke-width="1.300"/></svg>
<svg style="left:253px;top:499px;" width="18" height="18" viewBox="0 0 18 18"><circle cx="6.500" cy="5" r="3.500" fill="none" stroke="#111" stroke-width="1.300"/><circle cx="9" cy="10" r="3.500" fill="#fff" stroke="#111" stroke-width="1.300"/><circle cx="12" cy="13.500" r="3.500" fill="#e7edf8" stroke="#111" stroke-width="1.300"/></svg>
<svg style="left:226px;top:529px;" width="18" height="18" viewBox="0 0 18 18"><rect x="1.500" y="2.500" width="14" height="14" fill="#fff" stroke="#111" stroke-width="1.200"/><rect x="1.500" y="9.500" width="7" height="7" fill="#dfe6f3" stroke="#2a4a8c" stroke-width="1" stroke-dasharray="1.500 1.500"/></svg>
<svg style="left:253px;top:529px;" width="18" height="18" viewBox="0 0 18 18"><path d="M14.500 5.500a7 7 0 1 1-5.500-3.500" fill="none" stroke="#111" stroke-width="1.700"/><path d="M8 0l5 2.500-4.500 3z" fill="#111"/></svg>
<svg style="left:226px;top:559px;" width="18" height="18" viewBox="0 0 18 18"><path d="M2 2v14h6v-14z" fill="#fff" stroke="#111" stroke-width="1.200"/><path d="M8 3l7 13h-7z" fill="#5b86d8" stroke="#1a3a7c" stroke-width="1"/></svg>
<div style="left:253px;top:559px;width:1px;height:19px;background:#c5c1ae;"></div>
<svg style="left:257px;top:559px;" width="18" height="18" viewBox="0 0 18 18"><path d="M4 4h11l-3 5h-11z" fill="#e9e7dc" stroke="#9c9a8c" stroke-width="1"/><path d="M3 12h8v4h-8z" fill="#f3f1e7" stroke="#9c9a8c" stroke-width="1"/></svg>
<svg style="left:226px;top:589px;" width="18" height="18" viewBox="0 0 18 18"><path d="M9 1l7 7-7 8-7-8z" fill="#3c6bc7" stroke="#111" stroke-width="1.100"/><path d="M2 8h14l-7 8z" fill="#1b3f8f"/><path d="M12 6q5 1 3 10" fill="none" stroke="#111" stroke-width="1.300"/></svg>
<div style="left:253px;top:589px;width:1px;height:19px;background:#c5c1ae;"></div>
<svg style="left:258px;top:589px;" width="18" height="18" viewBox="0 0 18 18"><rect x="1" y="1" width="16" height="16" fill="#2f8f8a"/><text x="6.500" y="10" font-size="9" font-weight="bold" fill="#fff" text-anchor="middle">A</text><path d="M11 3h4v4h-4zM3 12h5v3h-5zM11 10h4v5h-4z" fill="#cfeeea" stroke="#0e4f4a" stroke-width=".7"/></svg>
<span class="t" style="left:231px;top:616.30px;font-size:18px;line-height:22px;color:#000;">A</span>
<svg style="left:260px;top:626px;" width="5" height="3" viewBox="0 0 5 3"><path d="M0 0h5l-2.5 3z" fill="#000"/></svg>
<svg style="left:225px;top:648px;" width="18" height="18" viewBox="0 0 18 18"><rect x="2" y="2.500" width="14" height="13" fill="#fff" stroke="#111" stroke-width="1.200"/><path d="M3 14l4-5 3 3 3-4 2.500 3v3.500z" fill="#3c6bc7"/><circle cx="6" cy="6" r="1.500" fill="#f3c22b"/></svg>
<div style="left:253px;top:648px;width:1px;height:19px;background:#c5c1ae;"></div>
<svg style="left:258px;top:648px;" width="18" height="18" viewBox="0 0 18 18"><rect x="2" y="2" width="10" height="10" fill="#cfe8c8" stroke="#2d7a2a" stroke-width="1.200"/><path d="M4 5h5l-3 2 3 2h-5" fill="none" stroke="#2d7a2a" stroke-width="1"/><rect x="13" y="6" width="3" height="3" fill="#7da0dc"/><rect x="9" y="13" width="3" height="3" fill="#7da0dc"/><rect x="14" y="13" width="3" height="3" fill="#7da0dc"/></svg>
<div style="left:0px;top:845px;width:293px;height:1px;background:#bdbaa8;"></div>
<!-- drawing -->
<div style="left:293px;top:83px;width:1147px;height:1px;background:#77766a;"></div>
<div style="left:293px;top:83px;width:1px;height:763px;background:#77766a;"></div>
<svg style="left:0;top:0" width="1440" height="900" viewBox="0 0 1440 900"><defs><clipPath id="dc"><rect x="294" y="84" width="1146" height="762"/></clipPath><clipPath id="lc"><rect x="410" y="627.500" width="160" height="50"/></clipPath></defs><g clip-path="url(#dc)">
<rect x="294" y="84" width="451" height="762" fill="#fff"/>
<rect x="745" y="84" width="693" height="762" fill="#808080"/>
<rect x="1438" y="84" width="2" height="762" fill="#fbfaf6"/>
<text x="295" y="386.5" font-size="15.5" fill="#000" textLength="28.5" lengthAdjust="spacingAndGlyphs">-mK</text>
<text x="313" y="403" font-size="12.2" fill="#111" text-anchor="middle">400</text>
<text x="313" y="418" font-size="12.2" fill="#111" text-anchor="middle">1000</text>
<text x="352" y="403" font-size="12.2" fill="#111" text-anchor="middle">1000</text>
<text x="352" y="418" font-size="12.2" fill="#111" text-anchor="middle">2000</text>
<text x="391" y="403" font-size="12.2" fill="#111" text-anchor="middle">2000</text>
<text x="391" y="418" font-size="12.2" fill="#111" text-anchor="middle">4000</text>
<text x="297.5" y="440" font-size="12.2" fill="#111" textLength="30.5" lengthAdjust="spacingAndGlyphs">± 0,8</text>
<text x="337" y="440" font-size="12.2" fill="#111" textLength="30" lengthAdjust="spacingAndGlyphs">± 1,2</text>
<text x="381.5" y="440" font-size="12.2" fill="#111" textLength="18.5" lengthAdjust="spacingAndGlyphs">±2</text>
<text x="292" y="497" font-size="15" fill="#000" textLength="81.5" lengthAdjust="spacingAndGlyphs">O 13920-BF</text>
<text x="295" y="550" font-size="15" fill="#000" textLength="81" lengthAdjust="spacingAndGlyphs">N 13 Tol. 6g</text>
<text x="291" y="577" font-size="15" fill="#000" textLength="81" lengthAdjust="spacingAndGlyphs">N 13 Tol. 6H</text>
<text x="449" y="421" font-size="17.5" fill="#000" textLength="86" lengthAdjust="spacingAndGlyphs">Tolerierung</text>
<text x="434.5" y="441.5" font-size="17.5" fill="#000" textLength="117" lengthAdjust="spacingAndGlyphs">nach ISO 8015</text>
<text x="500" y="498.5" font-size="17.5" fill="#000" textLength="52" lengthAdjust="spacingAndGlyphs">Datum</text>
<text x="419" y="526" font-size="11" fill="#1a0a20" textLength="54" lengthAdjust="spacingAndGlyphs">Gezeichnet</text>
<text x="419" y="553" font-size="11" fill="#1a0a20" textLength="51" lengthAdjust="spacingAndGlyphs">Kontrolliert</text>
<text x="419" y="580" font-size="11" fill="#1a0a20" textLength="24" lengthAdjust="spacingAndGlyphs">Norm</text>
<text x="485" y="526" font-size="17.5" fill="#000" textLength="120" lengthAdjust="spacingAndGlyphs">&lt;ERSTELLER&gt;</text>
<text x="485" y="553" font-size="17.5" fill="#000" textLength="153" lengthAdjust="spacingAndGlyphs">&lt;KONTROLLIERT&gt;</text>
<text x="485" y="580" font-size="17.5" fill="#000" textLength="128" lengthAdjust="spacingAndGlyphs">&lt;GENEHMIGT&gt;</text>
<text x="273" y="713" font-size="13" fill="#1a1a1a" textLength="38" lengthAdjust="spacingAndGlyphs">Datum</text>
<text x="354.5" y="712.5" font-size="13" fill="#1a1a1a" textLength="34.5" lengthAdjust="spacingAndGlyphs">Name</text>
<path d="M413 627.300L420.600 621H574.400L567 627.300Z" fill="#fff" stroke="#000" stroke-width="1.800"/>
<text y="669.500" font-weight="bold" fill="#fff" stroke="#000" stroke-width="3.700" stroke-linejoin="round" clip-path="url(#lc)"><tspan x="420" font-size="76" textLength="27" lengthAdjust="spacingAndGlyphs">T</tspan><tspan x="441.75" font-size="50" textLength="12.5" lengthAdjust="spacingAndGlyphs">I</tspan><tspan x="459.5" font-size="50" textLength="25" lengthAdjust="spacingAndGlyphs">G</tspan><tspan x="489" font-size="50" textLength="27" lengthAdjust="spacingAndGlyphs">E</tspan><tspan x="522.5" font-size="50" textLength="26" lengthAdjust="spacingAndGlyphs">R</tspan></text>
<text x="560" y="670" font-size="21.5" fill="#000" textLength="129" lengthAdjust="spacingAndGlyphs">Seilwinden-u.</text>
<text x="434" y="688" font-size="21.3" fill="#000" textLength="138.5" lengthAdjust="spacingAndGlyphs">Maschinenbau</text>
<text x="578.5" y="689.5" font-size="9" fill="#333" textLength="56" lengthAdjust="spacingAndGlyphs">GmbH&amp;CoKG</text>
<text x="431" y="716" font-size="17.6" fill="#000" textLength="163" lengthAdjust="spacingAndGlyphs">CAD Zeichnung (3D)</text>
<text x="698.5" y="716" font-size="17.6" fill="#000" textLength="212.5" lengthAdjust="spacingAndGlyphs">Urheberschutz nach DIN34</text>
<text x="698" y="633" font-size="13" fill="#1a1a1a" textLength="88" lengthAdjust="spacingAndGlyphs">Bauteilnummer</text>
<text x="808" y="662.5" font-size="22" fill="#000" textLength="217" lengthAdjust="spacingAndGlyphs">&lt;BAUTEILNUMMER&gt;</text>
<text x="1072" y="412.5" font-size="21.5" fill="#000" textLength="147" lengthAdjust="spacingAndGlyphs">&lt;KLASSE\P2;&gt;</text>
<text x="1129.5" y="687.5" font-size="21.5" fill="#000" textLength="126" lengthAdjust="spacingAndGlyphs">&lt;Blattgröße&gt;</text>
<text x="1043.5" y="657" font-size="44" fill="#0d850f" textLength="300.5" lengthAdjust="spacingAndGlyphs" stroke="#0d850f" stroke-width="1.100">&lt;Blattnummer&gt;</text>
<g shape-rendering="crispEdges" fill="none">
<path d="M294 392H412" stroke="#000" stroke-width="2"/>
<path d="M294 421H412" stroke="#000" stroke-width="2"/>
<path d="M294 450H412" stroke="#000" stroke-width="2"/>
<path d="M294 480H745" stroke="#000" stroke-width="2"/>
<path d="M294 533H521" stroke="#000" stroke-width="2"/>
<path d="M294 560H521" stroke="#000" stroke-width="2"/>
<path d="M294 587H745" stroke="#000" stroke-width="2"/>
<path d="M294 614H1241" stroke="#000" stroke-width="2"/>
<path d="M294 641H411" stroke="#000" stroke-width="2"/>
<path d="M294 668H411" stroke="#000" stroke-width="2"/>
<path d="M294 695H1241" stroke="#000" stroke-width="2"/>
<path d="M411 505.5H521" stroke="#000" stroke-width="1"/>
<path d="M333 391V481" stroke="#000" stroke-width="2"/>
<path d="M372 391V481" stroke="#000" stroke-width="2"/>
<path d="M411 371V722" stroke="#000" stroke-width="2"/>
<path d="M333 586V722" stroke="#000" stroke-width="2"/>
<path d="M477 481V588" stroke="#000" stroke-width="2"/>
<path d="M576 598V615" stroke="#000" stroke-width="2"/>
<path d="M691 598V722" stroke="#000" stroke-width="2"/>
<path d="M967 694V722" stroke="#000" stroke-width="2"/>
<path d="M1142 613V696" stroke="#000" stroke-width="2"/>
<path d="M1132 429H1241" stroke="#000" stroke-width="2"/>
<path d="M1132 480H1241" stroke="#000" stroke-width="2"/>
<path d="M1142 669H1241" stroke="#000" stroke-width="2"/>
</g>
<g fill="none">
<path d="M411 372L521.5 443.3" stroke="#3a0a4c" stroke-width="3"/>
<path d="M697 614L1142 694" stroke="#3a0a4c" stroke-width="3"/>
<path d="M1066 597.6L1241 613" stroke="#3a0a4c" stroke-width="3"/>
<path d="M333 696L411 720.5" stroke="#3a0a4c" stroke-width="3"/>
<path d="M294 707L333 720.5" stroke="#3a0a4c" stroke-width="3"/>
</g>
<g shape-rendering="crispEdges" fill="none">
<path d="M294 371.5H1243" stroke="#3a0a4c" stroke-width="3"/>
<path d="M294 721.5H1243" stroke="#3a0a4c" stroke-width="3"/>
<path d="M1241.5 370V723" stroke="#3a0a4c" stroke-width="3"/>
<path d="M294 506.5H411" stroke="#3a0a4c" stroke-width="3"/>
<path d="M411 526.5H521" stroke="#3a0a4c" stroke-width="3"/>
<path d="M411 553.5H521" stroke="#3a0a4c" stroke-width="3"/>
<path d="M411 580.5H521" stroke="#3a0a4c" stroke-width="3"/>
<path d="M417.5 506V587" stroke="#3a0a4c" stroke-width="3"/>
<path d="M483.5 506V587" stroke="#3a0a4c" stroke-width="3"/>
<path d="M697.5 598V695" stroke="#3a0a4c" stroke-width="3"/>
<path d="M1132 562.5H1243" stroke="#3a0a4c" stroke-width="3"/>
</g>
<path d="M477 499.5H521" stroke="#7fee1c" stroke-width="3"/>
<path d="M1142 667L1240.5 615.5" stroke="#7fee1c" stroke-width="3"/>
<path d="M1142 694L1240.5 670.5" stroke="#7fee1c" stroke-width="3"/>
<rect x="311.5" y="404.5" width="3" height="3" fill="#3a0a4c"/>
<rect x="350.5" y="404.5" width="3" height="3" fill="#3a0a4c"/>
<rect x="389.5" y="404.5" width="3" height="3" fill="#3a0a4c"/>
<rect x="311" y="434.5" width="3" height="3" fill="#3a0a4c"/>
<rect x="350" y="434.5" width="3" height="3" fill="#3a0a4c"/>
<rect x="387.5" y="436.5" width="3" height="3" fill="#3a0a4c"/>
<rect x="411" y="669" width="4" height="4" fill="#3a0a4c"/>
<rect x="427.5" y="714.5" width="4" height="4" fill="#3a0a4c"/>
<rect x="427" y="687.5" width="4" height="4" fill="#78e020"/>
<rect x="695" y="714.5" width="4" height="4" fill="#78e020"/>
<rect x="1243" y="532" width="2" height="2" fill="#78e020"/>
<rect x="1238.500" y="425.500" width="6" height="7" fill="#f0b030" stroke="#000" stroke-width="1"/>
<g shape-rendering="crispEdges" fill="none">
<path d="M302 155.5H1243" stroke="#2a2a1e" stroke-width="1"/>
<path d="M1242.5 146V371" stroke="#2a2a1e" stroke-width="1"/>
<path d="M294 207.5H410" stroke="#2a2a1e" stroke-width="1"/>
<path d="M410.5 195V371" stroke="#2a2a1e" stroke-width="1"/>
<path d="M332.5 227V391" stroke="#2a2a1e" stroke-width="1"/>
<path d="M371.5 244V391" stroke="#2a2a1e" stroke-width="1"/>
<path d="M294 237.5H310" stroke="#2a2a1e" stroke-width="1"/>
<path d="M334 255.5H353" stroke="#2a2a1e" stroke-width="1"/>
<path d="M1132 332.5H1242" stroke="#2a2a1e" stroke-width="1"/>
<path d="M1247 371.5H1381" stroke="#2a2a1e" stroke-width="1"/>
<path d="M1247 428.5H1381" stroke="#2a2a1e" stroke-width="1"/>
<path d="M1361.5 372V400" stroke="#2a2a1e" stroke-width="1"/>
<path d="M1361.5 412V428" stroke="#2a2a1e" stroke-width="1"/>
<path d="M1245 480.5H1294" stroke="#2a2a1e" stroke-width="1"/>
<path d="M1245 562.5H1294" stroke="#2a2a1e" stroke-width="1"/>
<path d="M1285.5 481V512" stroke="#2a2a1e" stroke-width="1"/>
<path d="M1285.5 528V562" stroke="#2a2a1e" stroke-width="1"/>
<path d="M332.5 724V757" stroke="#2a2a1e" stroke-width="1"/>
<path d="M410.5 724V782" stroke="#2a2a1e" stroke-width="1"/>
<path d="M434.5 722V761" stroke="#2a2a1e" stroke-width="1"/>
<path d="M476.5 464V783" stroke="#2a2a1e" stroke-width="1"/>
<path d="M482.5 464V506" stroke="#2a2a1e" stroke-width="1"/>
<path d="M575.5 614V785" stroke="#2a2a1e" stroke-width="1"/>
<path d="M691.5 724V846" stroke="#2a2a1e" stroke-width="1"/>
<path d="M294 749.5H308" stroke="#2a2a1e" stroke-width="1"/>
<path d="M322 749.5H332" stroke="#2a2a1e" stroke-width="1"/>
<path d="M411 777.5H428" stroke="#2a2a1e" stroke-width="1"/>
<path d="M453 777.5H513" stroke="#2a2a1e" stroke-width="1"/>
<path d="M538 777.5H575" stroke="#2a2a1e" stroke-width="1"/>
<path d="M576 779.5H616" stroke="#2a2a1e" stroke-width="1"/>
<path d="M642 779.5H691" stroke="#2a2a1e" stroke-width="1"/>
<path d="M1142.5 697V806" stroke="#2a2a1e" stroke-width="1"/>
<path d="M1242.5 725V846" stroke="#2a2a1e" stroke-width="1"/>
<path d="M1142 798.5H1214" stroke="#2a2a1e" stroke-width="1"/>
<path d="M468 464.5H505" stroke="#2a2a1e" stroke-width="1"/>
<path d="M394 500.5H426" stroke="#2a2a1e" stroke-width="1"/>
<path d="M459 500.5H477" stroke="#2a2a1e" stroke-width="1"/>
<path d="M459.5 493V516" stroke="#2a2a1e" stroke-width="1"/>
<path d="M400.5 512V600" stroke="#2a2a1e" stroke-width="1"/>
<path d="M400 526.5H411" stroke="#2a2a1e" stroke-width="1"/>
<path d="M400 553.5H411" stroke="#2a2a1e" stroke-width="1"/>
<path d="M400 580.5H411" stroke="#2a2a1e" stroke-width="1"/>
<path d="M678.5 598V657" stroke="#2a2a1e" stroke-width="1"/>
<path d="M673 623.5H697" stroke="#2a2a1e" stroke-width="1"/>
<path d="M576 620.5H603" stroke="#2a2a1e" stroke-width="1"/>
<path d="M540 670.5H603" stroke="#2a2a1e" stroke-width="1"/>
<path d="M600.5 621V670" stroke="#2a2a1e" stroke-width="1"/>
<path d="M381.5 605V650" stroke="#2a2a1e" stroke-width="1"/>
<path d="M376 620.5H411" stroke="#2a2a1e" stroke-width="1"/>
<path d="M390 627.5H413" stroke="#2a2a1e" stroke-width="1"/>
<path d="M411 662.5H440" stroke="#2a2a1e" stroke-width="1"/>
<path d="M452.5 606V640" stroke="#2a2a1e" stroke-width="1"/>
<path d="M405 671.5H413" stroke="#2a2a1e" stroke-width="1"/>
<path d="M413.500 615V692" stroke="#2a2a1e" stroke-width="1" stroke-dasharray="6 3"/>
</g>
<g fill="none">
<path d="M410 207.5L395 204V211Z" fill="none" stroke="#2a2a1e" stroke-width="1"/>
<path d="M296 237.5L310 234V241Z" fill="none" stroke="#2a2a1e" stroke-width="1"/>
<path d="M334 255.5L348 252V259Z" fill="none" stroke="#2a2a1e" stroke-width="1"/>
<path d="M1241 332.5L1227 329.5V335.5Z" fill="none" stroke="#2a2a1e" stroke-width="1"/>
<path d="M1361.5 372L1358 388H1365Z" fill="none" stroke="#2a2a1e" stroke-width="1"/>
<path d="M1361.5 428L1358 412H1365Z" fill="none" stroke="#2a2a1e" stroke-width="1"/>
<path d="M1285.5 481L1282 497H1289Z" fill="none" stroke="#2a2a1e" stroke-width="1"/>
<path d="M1285.5 562L1282 546H1289Z" fill="none" stroke="#2a2a1e" stroke-width="1"/>
<path d="M332 749.5L322 746.5V752.5Z" fill="none" stroke="#2a2a1e" stroke-width="1"/>
<path d="M411 777.5L426 774V781Z" fill="none" stroke="#2a2a1e" stroke-width="1"/>
<path d="M476 777.5L461 774V781Z" fill="none" stroke="#2a2a1e" stroke-width="1"/>
<path d="M477 777.5L492 774V781Z" fill="none" stroke="#2a2a1e" stroke-width="1"/>
<path d="M575 777.5L560 774V781Z" fill="none" stroke="#2a2a1e" stroke-width="1"/>
<path d="M576 779.5L591 776V783Z" fill="none" stroke="#2a2a1e" stroke-width="1"/>
<path d="M691 779.5L676 776V783Z" fill="none" stroke="#2a2a1e" stroke-width="1"/>
<path d="M1142 798.5L1157 795.5V801.5Z" fill="none" stroke="#2a2a1e" stroke-width="1"/>
<path d="M434.5 722L432 732H437Z" fill="none" stroke="#2a2a1e" stroke-width="1"/>
<path d="M479.5 464.5l-12 -3.500v7zM479.5 464.5l12 -3.500v7z" stroke="#2a2a1e" stroke-width="1"/>
<path d="M413.5 500.5l-12 -3.500v7zM413.5 500.5l12 -3.500v7z" stroke="#2a2a1e" stroke-width="1"/>
<path d="M396 514h9l-2.500 9h-4z" stroke="#2a2a1e" stroke-width="1"/>
<path d="M397 534h7M397 541h7M400.500 534v7" stroke="#2a2a1e" stroke-width="1"/>
<path d="M396 541h9l-2.500 9h-4z" stroke="#2a2a1e" stroke-width="1"/>
<path d="M397 561h7M397 568h7M400.500 561v7" stroke="#2a2a1e" stroke-width="1"/>
<path d="M396 568h9l-2.500 9h-4z" stroke="#2a2a1e" stroke-width="1"/>
<path d="M397 588h7M397 595h7M400.500 588v7" stroke="#2a2a1e" stroke-width="1"/>
<path d="M456 516h7l-2.500 -9h-2z" stroke="#2a2a1e" stroke-width="1"/>
<path d="M678.5 612L675.5 598H681.5Z" fill="none" stroke="#2a2a1e" stroke-width="1"/>
<path d="M678.5 624L676 632H681Z" fill="none" stroke="#2a2a1e" stroke-width="1"/>
<path d="M600.5 621L597 635H604Z" fill="none" stroke="#2a2a1e" stroke-width="1"/>
<path d="M600.5 670L597 656H604Z" fill="none" stroke="#2a2a1e" stroke-width="1"/>
<path d="M574 615.5L558 612V619Z" fill="none" stroke="#2a2a1e" stroke-width="1"/>
<path d="M381.5 620L379 612H384Z" fill="none" stroke="#2a2a1e" stroke-width="1"/>
<path d="M381.5 628L378.5 642H384.5Z" fill="none" stroke="#2a2a1e" stroke-width="1"/>
<path d="M393.5 627L390 618H397Z" fill="none" stroke="#2a2a1e" stroke-width="1"/>
<path d="M430 617L418 614V620Z" fill="none" stroke="#2a2a1e" stroke-width="1"/>
<path d="M452.5 620L449.5 606H455.5Z" fill="none" stroke="#2a2a1e" stroke-width="1"/>
<path d="M413 662.5L439 659.5V665.5Z" fill="none" stroke="#2a2a1e" stroke-width="1"/>
</g>
<g fill="#55554a" font-size="11">
<text x="294.5" y="159.5" font-size="11" fill="#55554a" textLength="6" lengthAdjust="spacingAndGlyphs">0</text>
<text x="312.5" y="240" font-size="11" fill="#55554a" textLength="47.5" lengthAdjust="spacingAndGlyphs">FX:6,127</text>
<text x="292.5" y="259" font-size="11" fill="#55554a" textLength="47.5" lengthAdjust="spacingAndGlyphs">FX:6,127</text>
<text x="354" y="259" font-size="11" fill="#55554a" textLength="48" lengthAdjust="spacingAndGlyphs">FX:6,127</text>
<text x="1130" y="336" font-size="11" fill="#4a4a3e">7</text>
<text x="1358.5" y="409.5" font-size="11" fill="#4a4a3e">9</text>
<text x="1279" y="524" font-size="11" fill="#4a4a3e" textLength="13" lengthAdjust="spacingAndGlyphs">13</text>
<text x="1216" y="802" font-size="11" fill="#4a4a3e" textLength="23.5" lengthAdjust="spacingAndGlyphs">15,8</text>
<text x="308.5" y="753.5" font-size="11" fill="#55554a" textLength="12.5" lengthAdjust="spacingAndGlyphs">13</text>
<text x="429.5" y="781" font-size="11" fill="#55554a" textLength="22" lengthAdjust="spacingAndGlyphs">10,4</text>
<text x="514" y="781.5" font-size="11" fill="#55554a" textLength="23.5" lengthAdjust="spacingAndGlyphs">15,6</text>
<text x="618" y="783" font-size="11" fill="#55554a" textLength="23" lengthAdjust="spacingAndGlyphs">18,2</text>
<text x="505.5" y="468.5" font-size="11" fill="#55554a">1</text>
<text x="393.5" y="504" font-size="11" fill="#55554a">1</text>
<text x="456.5" y="496" font-size="11" fill="#55554a">1'</text>
<text x="430.5" y="744" font-size="11" fill="#55554a">1'</text>
<text x="378.5" y="608" font-size="11" fill="#55554a">1'</text>
<text x="671" y="641" font-size="11" fill="#55554a" textLength="16" lengthAdjust="spacingAndGlyphs">1,5</text>
<text x="401.5" y="610" font-size="11" fill="#55554a" textLength="29.5" lengthAdjust="spacingAndGlyphs">135,0</text>
<text x="500" y="618" font-size="11" fill="#55554a" textLength="29.5" lengthAdjust="spacingAndGlyphs">25,06</text>
<text x="403.5" y="637" font-size="11" fill="#55554a" textLength="129" lengthAdjust="spacingAndGlyphs">2,512 FX:1,13,7182,3,635</text>
<text x="405" y="653" font-size="11" fill="#55554a" textLength="172" lengthAdjust="spacingAndGlyphs">FX:1,FX:1FX:1,1,FX:1,935,31</text>
<text x="585" y="644" font-size="11" fill="#55554a" textLength="30" lengthAdjust="spacingAndGlyphs">7,893</text>
<text x="583" y="657.5" font-size="11" fill="#55554a" textLength="17" lengthAdjust="spacingAndGlyphs">0,2</text>
<text x="505" y="661" font-size="11" fill="#55554a" textLength="70" lengthAdjust="spacingAndGlyphs">FX:1,FX:1,175</text>
<text x="386" y="662" font-size="11" fill="#55554a" textLength="23" lengthAdjust="spacingAndGlyphs">−0,5</text>
<text x="436" y="671" font-size="11" fill="#55554a" textLength="17" lengthAdjust="spacingAndGlyphs">0,4</text>
<text x="419" y="678.5" font-size="11" fill="#55554a" textLength="114" lengthAdjust="spacingAndGlyphs">FX:6,175 FX:6,175 6,175</text>
<text x="436" y="678.5" font-size="11" fill="#55554a" textLength="48" lengthAdjust="spacingAndGlyphs">FX:6,175</text>
</g>
<circle cx="1040.5" cy="625.5" r="3.800" fill="#00ff00" stroke="#0a3a0a" stroke-width="1"/>
<circle cx="1040.5" cy="641.5" r="3.800" fill="#00ff00" stroke="#0a3a0a" stroke-width="1"/>
<circle cx="1040.5" cy="657.5" r="3.800" fill="#00ff00" stroke="#0a3a0a" stroke-width="1"/>
<circle cx="1192.5" cy="625.5" r="3.800" fill="#00ff00" stroke="#0a3a0a" stroke-width="1"/>
<circle cx="1192.5" cy="657.5" r="3.800" fill="#00ff00" stroke="#0a3a0a" stroke-width="1"/>
<circle cx="1343.5" cy="625.5" r="3.800" fill="#00ff00" stroke="#0a3a0a" stroke-width="1"/>
<circle cx="1343.5" cy="641.5" r="3.800" fill="#00ff00" stroke="#0a3a0a" stroke-width="1"/>
<circle cx="1343.5" cy="657.5" r="3.800" fill="#00ff00" stroke="#0a3a0a" stroke-width="1"/>
</g></svg>
<!-- dialog -->
<div style="left:520px;top:88px;width:612px;height:511px;background:#0a36d6;border-radius:8px 8px 0 0;"></div>
<div style="left:520px;top:88px;width:612px;height:30px;border-radius:8px 8px 0 0;background:linear-gradient(#0a5fee 0,#2f8bff 2px,#1468f3 5px,#0458e6 9px,#0355e2 16px,#0660f0 23px,#0553dd 27px,#0340c4 30px);"></div>
<div style="left:524px;top:118px;width:604px;height:477px;background:#ece9d8;"></div>
<div style="left:523px;top:594px;width:606px;height:1px;background:#f6f5ee;"></div>
<span class="t" style="left:528.5px;top:97.30px;font-size:13px;line-height:17px;color:#fff;letter-spacing:0.140px;font-weight:bold;text-shadow:1px 1px 0 #0a2a8a;">Text formatieren</span>
<div style="left:1105px;top:94px;width:21px;height:21px;background:linear-gradient(135deg,#e9866a 0,#d5502e 45%,#b93a1c 100%);border:1px solid #fff;border-radius:3px;box-sizing:border-box;"></div>
<svg style="left:1105px;top:94px;" width="21" height="21" viewBox="0 0 21 21"><path d="M6 6l9 9M15 6l-9 9" stroke="#fff" stroke-width="2.300" stroke-linecap="round"/></svg>
<span class="t" style="left:531.5px;top:125.80px;font-size:11px;line-height:15px;color:#000;letter-spacing:-0.334px;">Stil:</span>
<div style="left:532px;top:146px;width:195px;height:21px;background:#ece9d8;border:1px solid #c9c7ba;box-sizing:border-box;"></div>
<div style="left:709px;top:148px;width:16px;height:17px;background:#f1efe6;border-radius:2px;"></div>
<svg style="left:713px;top:153.5px;" width="9" height="6" viewBox="0 0 9 6"><path d="M1 1l3.500 3.500 3.500-3.500" fill="none" stroke="#c9c7ba" stroke-width="2"/></svg>
<span class="t" style="left:535.7px;top:149.80px;font-size:11px;line-height:15px;color:#aca899;letter-spacing:0.104px;">2,5</span>
<div style="left:533px;top:195px;width:21px;height:21px;background:linear-gradient(#fff 0,#f6f8fc 50%,#dde6f4 100%);border:1px solid #2f4f7a;border-radius:3px;box-sizing:border-box;"></div>
<svg style="left:533px;top:195px;" width="21" height="21" viewBox="0 0 21 21"><rect x="4" y="3.8" width="13" height="1.900" fill="#000"/><rect x="4" y="7.1" width="13" height="1.900" fill="#000"/><rect x="4" y="10.4" width="13" height="1.900" fill="#000"/><rect x="4" y="13.7" width="13" height="1.900" fill="#000"/><rect x="4" y="17" width="13" height="1.900" fill="#000"/></svg>
<div style="left:555.5px;top:195px;width:21px;height:21px;background:linear-gradient(#93abd6,#a5b9df);border:1px solid #4a6184;border-radius:3px;box-sizing:border-box;"></div>
<svg style="left:555.5px;top:195px;" width="21" height="21" viewBox="0 0 21 21"><rect x="5" y="3.8" width="11" height="1.900" fill="#000"/><rect x="6.5" y="7.1" width="8" height="1.900" fill="#000"/><rect x="4" y="10.4" width="13" height="1.900" fill="#000"/><rect x="6.5" y="13.7" width="8" height="1.900" fill="#000"/><rect x="4" y="17" width="13" height="1.900" fill="#000"/></svg>
<div style="left:578px;top:195px;width:21px;height:21px;background:linear-gradient(#fff 0,#f6f8fc 50%,#dde6f4 100%);border:1px solid #2f4f7a;border-radius:3px;box-sizing:border-box;"></div>
<svg style="left:578px;top:195px;" width="21" height="21" viewBox="0 0 21 21"><rect x="4" y="3.8" width="13" height="1.900" fill="#000"/><rect x="4" y="7.1" width="13" height="1.900" fill="#000"/><rect x="4" y="10.4" width="13" height="1.900" fill="#000"/><rect x="4" y="13.7" width="13" height="1.900" fill="#000"/><rect x="4" y="17" width="13" height="1.900" fill="#000"/></svg>
<div style="left:606px;top:195px;width:21px;height:21px;background:linear-gradient(#fff 0,#f6f8fc 50%,#dde6f4 100%);border:1px solid #2f4f7a;border-radius:3px;box-sizing:border-box;"></div>
<svg style="left:606px;top:195px;" width="21" height="21" viewBox="0 0 21 21"><rect x="4.500" y="3.5" width="12" height="1.600" fill="#000"/><rect x="7" y="6.8" width="8" height="1.600" fill="#000"/></svg>
<div style="left:629px;top:195px;width:21px;height:21px;background:linear-gradient(#93abd6,#a5b9df);border:1px solid #4a6184;border-radius:3px;box-sizing:border-box;"></div>
<svg style="left:629px;top:195px;" width="21" height="21" viewBox="0 0 21 21"><rect x="4.500" y="7.8" width="12" height="1.600" fill="#000"/><rect x="7" y="11.1" width="8" height="1.600" fill="#000"/></svg>
<div style="left:651.5px;top:195px;width:21px;height:21px;background:linear-gradient(#fff 0,#f6f8fc 50%,#dde6f4 100%);border:1px solid #2f4f7a;border-radius:3px;box-sizing:border-box;"></div>
<svg style="left:651.5px;top:195px;" width="21" height="21" viewBox="0 0 21 21"><rect x="4.500" y="11.5" width="12" height="1.600" fill="#000"/><rect x="7" y="14.8" width="8" height="1.600" fill="#000"/></svg>
<div style="left:674px;top:195px;width:21px;height:21px;background:linear-gradient(#fff 0,#f6f8fc 50%,#dde6f4 100%);border:1px solid #2f4f7a;border-radius:3px;box-sizing:border-box;"></div>
<svg style="left:674px;top:195px;" width="21" height="21" viewBox="0 0 21 21"><path d="M0 9h21" stroke="#2fc35a" stroke-width="2.400"/><path d="M3.500 6v11M10.500 6v11M17.500 6v11" stroke="#1a3f8a" stroke-width="1.400"/><circle cx="3.500" cy="6" r="2" fill="#cfe0ff" stroke="#1a3f8a" stroke-width="1"/><circle cx="10.500" cy="6" r="2" fill="#cfe0ff" stroke="#1a3f8a" stroke-width="1"/><circle cx="17.500" cy="6" r="2" fill="#cfe0ff" stroke="#1a3f8a" stroke-width="1"/></svg>
<div style="left:719px;top:195px;width:22px;height:21px;background:linear-gradient(#fff 0,#f6f8fc 50%,#dde6f4 100%);border:1px solid #2f4f7a;border-radius:3px;box-sizing:border-box;"></div>
<svg style="left:719px;top:195px;" width="22" height="21" viewBox="0 0 22 21"><rect x="3.500" y="3.500" width="15" height="14" fill="#fff" stroke="#2f4f7a" stroke-width="1"/><text x="8" y="12" font-size="9" fill="#2f4f7a" text-anchor="middle">A</text><path d="M12 6.500h5M12 9h5M12 11.500h5M5 14h12M5 16h12" stroke="#2f4f7a" stroke-width=".9"/></svg>
<div style="left:758px;top:195px;width:22px;height:21px;background:linear-gradient(#fff 0,#f6f8fc 50%,#dde6f4 100%);border:1px solid #2f4f7a;border-radius:3px;box-sizing:border-box;"></div>
<svg style="left:758px;top:195px;" width="22" height="21" viewBox="0 0 22 21"><text x="6.500" y="9" font-size="8" fill="#1f5fae" text-anchor="middle">A</text><text x="15.500" y="9" font-size="8" fill="#1f5fae" text-anchor="middle">A</text><path d="M2.500 2v8M19.500 2v8" stroke="#1f5fae" stroke-width="1"/><path d="M4 12.500h14M6.500 10.500l-2.500 2 2.500 2M15.500 10.500l2.500 2-2.500 2" fill="none" stroke="#1f5fae" stroke-width="1.200"/><path d="M3 17.500h6M19 17.500h-6M7 15.500l2 2-2 2M15 15.500l-2 2 2 2" fill="none" stroke="#1f5fae" stroke-width="1.200"/></svg>
<span class="t" style="left:787px;top:176.80px;font-size:11px;line-height:15px;color:#000;letter-spacing:-0.123px;">% Dehnung</span>
<div style="left:787px;top:195.5px;width:101px;height:20.5px;background:#fff;border:1px solid #7f9db9;box-sizing:border-box;"></div>
<span class="t" style="left:793px;top:198.80px;font-size:11px;line-height:15px;color:#000;letter-spacing:-0.427px;">100</span>
<div style="left:899px;top:195px;width:22px;height:21px;background:linear-gradient(#93abd6,#a5b9df);border:1px solid #4a6184;border-radius:3px;box-sizing:border-box;"></div>
<div style="left:902px;top:204.5px;width:16px;height:2px;background:#000;"></div>
<span class="t" style="left:929px;top:176.80px;font-size:11px;line-height:15px;color:#000;letter-spacing:-0.144px;">Abstand</span>
<div style="left:931px;top:196px;width:89px;height:21px;background:#fff;border:1px solid #7f9db9;box-sizing:border-box;"></div>
<div style="left:1003px;top:198px;width:15px;height:17px;background:linear-gradient(135deg,#cfdefd,#b4c9f5);border-radius:2px;"></div>
<svg style="left:1006px;top:203.5px;" width="9" height="6" viewBox="0 0 9 6"><path d="M1 1l3.500 3.500 3.500-3.500" fill="none" stroke="#4d6185" stroke-width="2"/></svg>
<span class="t" style="left:934.5px;top:199.80px;font-size:11px;line-height:15px;color:#000;letter-spacing:-0.365px;">Einfach</span>
<span class="t" style="left:1024px;top:176.80px;font-size:11px;line-height:15px;color:#000;letter-spacing:-0.007px;">Wert</span>
<div style="left:1025px;top:196px;width:89px;height:22.5px;background:#ece9d8;border:1px solid #a9a796;box-sizing:border-box;"></div>
<span class="t" style="left:532.5px;top:223.80px;font-size:11px;line-height:15px;color:#000;letter-spacing:0.054px;">Schriftart</span>
<div style="left:532px;top:242px;width:249px;height:20.5px;background:#fff;border:1px solid #7f9db9;box-sizing:border-box;"></div>
<div style="left:764px;top:244px;width:15px;height:16.5px;background:linear-gradient(135deg,#cfdefd,#b4c9f5);border-radius:2px;"></div>
<svg style="left:767px;top:249.25px;" width="9" height="6" viewBox="0 0 9 6"><path d="M1 1l3.500 3.500 3.500-3.500" fill="none" stroke="#4d6185" stroke-width="2"/></svg>
<span class="t" style="left:536px;top:245.80px;font-size:11px;line-height:15px;color:#000;letter-spacing:-0.376px;">Arial</span>
<span class="t" style="left:788px;top:223.80px;font-size:11px;line-height:15px;color:#000;letter-spacing:-0.793px;">Größe</span>
<div style="left:787px;top:242px;width:101px;height:20.5px;background:#fff;border:1px solid #7f9db9;box-sizing:border-box;"></div>
<div style="left:871px;top:244px;width:15px;height:16.5px;background:linear-gradient(135deg,#cfdefd,#b4c9f5);border-radius:2px;"></div>
<svg style="left:874px;top:249.25px;" width="9" height="6" viewBox="0 0 9 6"><path d="M1 1l3.500 3.500 3.500-3.500" fill="none" stroke="#4d6185" stroke-width="2"/></svg>
<span class="t" style="left:792.5px;top:245.80px;font-size:11px;line-height:15px;color:#000;letter-spacing:-0.299px;">5,00 mm</span>
<div style="left:893px;top:243px;width:22px;height:21px;background:linear-gradient(#fff 0,#f6f8fc 50%,#dde6f4 100%);border:1px solid #2f4f7a;border-radius:3px;box-sizing:border-box;"></div>
<span class="t" style="left:893px;top:243px;width:22px;height:21px;line-height:21px;text-align:center;font-family:'Liberation Serif',serif;font-size:15px;color:#000;font-weight:bold;">B</span>
<div style="left:917px;top:243px;width:22px;height:21px;background:linear-gradient(#fff 0,#f6f8fc 50%,#dde6f4 100%);border:1px solid #2f4f7a;border-radius:3px;box-sizing:border-box;"></div>
<span class="t" style="left:917px;top:243px;width:22px;height:21px;line-height:21px;text-align:center;font-family:'Liberation Serif',serif;font-size:15px;color:#000;font-weight:bold;font-style:italic;">I</span>
<div style="left:941px;top:243px;width:22px;height:21px;background:linear-gradient(#fff 0,#f6f8fc 50%,#dde6f4 100%);border:1px solid #2f4f7a;border-radius:3px;box-sizing:border-box;"></div>
<span class="t" style="left:941px;top:243px;width:22px;height:21px;line-height:21px;text-align:center;font-family:'Liberation Serif',serif;font-size:15px;color:#000;font-weight:bold;text-decoration:underline;">U</span>
<div style="left:968.5px;top:243px;width:21.5px;height:21px;background:#f5f4ea;border:1px solid #c9c7ba;border-radius:3px;box-sizing:border-box;"></div>
<svg style="left:968.5px;top:243px;" width="21.5" height="21" viewBox="0 0 21.5 21"><text x="10.700" y="9.500" font-size="8" fill="#aca899" text-anchor="middle">a</text><path d="M6 10.500h9.500" stroke="#aca899" stroke-width="1"/><text x="10.700" y="18" font-size="8" fill="#aca899" text-anchor="middle">b</text></svg>
<div style="left:995px;top:242px;width:24px;height:23px;background:#ece9d8;border:1px solid;border-color:#fff #716f64 #716f64 #fff;box-sizing:border-box;box-shadow:inset -1px -1px 0 #aca899;"></div>
<svg style="left:998px;top:246px;" width="17" height="15" viewBox="0 0 17 15"><path d="M1 11l5-3h10l-5 3z" fill="#2a2f6f" stroke="#111" stroke-width=".7"/><path d="M1 8l5-3h10l-5 3z" fill="#f0a0b0" stroke="#a01030" stroke-width=".9"/><path d="M1 5l5-3h10l-5 3z" fill="#f6c0c8" stroke="#c02040" stroke-width=".9"/></svg>
<span class="t" style="left:1026.5px;top:223.80px;font-size:11px;line-height:15px;color:#000;letter-spacing:-0.283px;">Drehung</span>
<div style="left:1025px;top:242px;width:44px;height:23px;background:#ece9d8;border:1px solid;border-color:#fff #716f64 #716f64 #fff;box-sizing:border-box;box-shadow:inset -1px -1px 0 #aca899;"></div>
<svg style="left:1031px;top:252px;" width="14" height="6" viewBox="0 0 14 6"><rect x=".5" y=".5" width="13" height="5" fill="#fff" stroke="#000" stroke-width="1"/><rect x="3" y="2" width="2" height="2" fill="#000"/><rect x="6.500" y="2" width="2" height="2" fill="#000"/></svg>
<svg style="left:1058px;top:251px;" width="8" height="5" viewBox="0 0 8 5"><path d="M0 0h8l-4 4.500z" fill="#000"/></svg>
<span class="t" style="left:532.3px;top:267.80px;font-size:11px;line-height:15px;color:#000;letter-spacing:-0.615px;">Typ</span>
<div style="left:532px;top:287px;width:219px;height:20.5px;background:#fff;border:1px solid #7f9db9;box-sizing:border-box;"></div>
<div style="left:734px;top:289px;width:15px;height:16.5px;background:linear-gradient(135deg,#cfdefd,#b4c9f5);border-radius:2px;"></div>
<svg style="left:737px;top:294.25px;" width="9" height="6" viewBox="0 0 9 6"><path d="M1 1l3.500 3.500 3.500-3.500" fill="none" stroke="#4d6185" stroke-width="2"/></svg>
<span class="t" style="left:535.7px;top:290.80px;font-size:11px;line-height:15px;color:#000;letter-spacing:-0.059px;">Blatteigenschaften</span>
<span class="t" style="left:759.5px;top:267.80px;font-size:11px;line-height:15px;color:#000;letter-spacing:-0.198px;">Eigenschaft</span>
<div style="left:760px;top:287px;width:195px;height:20.5px;background:#fff;border:1px solid #7f9db9;box-sizing:border-box;"></div>
<div style="left:938px;top:289px;width:15px;height:16.5px;background:linear-gradient(135deg,#cfdefd,#b4c9f5);border-radius:2px;"></div>
<svg style="left:941px;top:294.25px;" width="9" height="6" viewBox="0 0 9 6"><path d="M1 1l3.500 3.500 3.500-3.500" fill="none" stroke="#4d6185" stroke-width="2"/></svg>
<span class="t" style="left:763.3px;top:290.80px;font-size:11px;line-height:15px;color:#000;letter-spacing:-0.285px;">Blattnummer</span>
<span class="t" style="left:961px;top:267.80px;font-size:11px;line-height:15px;color:#000;letter-spacing:-0.371px;">Genauigkeit</span>
<div style="left:961px;top:287.5px;width:71.5px;height:19.5px;background:#ece9d8;border:1px solid #c9c7ba;box-sizing:border-box;"></div>
<div style="left:1014.5px;top:289.5px;width:16px;height:15.5px;background:#f1efe6;border-radius:2px;"></div>
<svg style="left:1018.5px;top:294.25px;" width="9" height="6" viewBox="0 0 9 6"><path d="M1 1l3.500 3.500 3.500-3.500" fill="none" stroke="#c9c7ba" stroke-width="2"/></svg>
<span class="t" style="left:964.7px;top:290.80px;font-size:11px;line-height:15px;color:#aca899;letter-spacing:0.030px;">2,12</span>
<div style="left:1040px;top:286px;width:22px;height:21px;background:linear-gradient(#fff 0,#f6f8fc 50%,#dde6f4 100%);border:1px solid #2f4f7a;border-radius:3px;box-sizing:border-box;"></div>
<svg style="left:1040px;top:286px;" width="22" height="21" viewBox="0 0 22 21"><text x="8" y="12" font-size="13" font-style="italic" font-weight="bold" fill="#111" text-anchor="middle" style="font-family:'Liberation Serif',serif">x</text><path d="M12 9.500h4.500v6" fill="none" stroke="#111" stroke-width="1.300"/><path d="M14 14.500h5l-2.500 3.500z" fill="#111"/></svg>
<span class="t" style="left:531.5px;top:315.80px;font-size:11px;line-height:15px;color:#000;letter-spacing:-0.244px;">Komponente:</span>
<div style="left:532px;top:336.5px;width:121.5px;height:20px;background:#ece9d8;border:1px solid #c9c7ba;box-sizing:border-box;"></div>
<div style="left:635.5px;top:338.5px;width:16px;height:16px;background:#f1efe6;border-radius:2px;"></div>
<svg style="left:639.5px;top:343.5px;" width="9" height="6" viewBox="0 0 9 6"><path d="M1 1l3.500 3.500 3.500-3.500" fill="none" stroke="#c9c7ba" stroke-width="2"/></svg>
<span class="t" style="left:661px;top:315.80px;font-size:11px;line-height:15px;color:#000;letter-spacing:-0.392px;">Quelle:</span>
<div style="left:661px;top:336.5px;width:143px;height:20px;background:#ece9d8;border:1px solid #c9c7ba;box-sizing:border-box;"></div>
<div style="left:786px;top:338.5px;width:16px;height:16px;background:#f1efe6;border-radius:2px;"></div>
<svg style="left:790px;top:343.5px;" width="9" height="6" viewBox="0 0 9 6"><path d="M1 1l3.500 3.500 3.500-3.500" fill="none" stroke="#c9c7ba" stroke-width="2"/></svg>
<span class="t" style="left:811px;top:315.80px;font-size:11px;line-height:15px;color:#000;letter-spacing:-0.046px;">Parameter:</span>
<div style="left:811px;top:336.5px;width:142.5px;height:20px;background:#ece9d8;border:1px solid #c9c7ba;box-sizing:border-box;"></div>
<div style="left:935.5px;top:338.5px;width:16px;height:16px;background:#f1efe6;border-radius:2px;"></div>
<svg style="left:939.5px;top:343.5px;" width="9" height="6" viewBox="0 0 9 6"><path d="M1 1l3.500 3.500 3.500-3.500" fill="none" stroke="#c9c7ba" stroke-width="2"/></svg>
<span class="t" style="left:961.5px;top:315.80px;font-size:11px;line-height:15px;color:#000;letter-spacing:-0.371px;">Genauigkeit</span>
<div style="left:961px;top:336.5px;width:71.5px;height:20px;background:#ece9d8;border:1px solid #c9c7ba;box-sizing:border-box;"></div>
<div style="left:1014.5px;top:338.5px;width:16px;height:16px;background:#f1efe6;border-radius:2px;"></div>
<svg style="left:1018.5px;top:343.5px;" width="9" height="6" viewBox="0 0 9 6"><path d="M1 1l3.500 3.500 3.500-3.500" fill="none" stroke="#c9c7ba" stroke-width="2"/></svg>
<span class="t" style="left:964.7px;top:339.80px;font-size:11px;line-height:15px;color:#aca899;letter-spacing:0.030px;">2,12</span>
<div style="left:1041px;top:335.5px;width:21px;height:20px;background:#f5f4ea;border:1px solid #c9c7ba;border-radius:3px;box-sizing:border-box;"></div>
<svg style="left:1041px;top:335.5px;" width="21" height="20" viewBox="0 0 21 20"><path d="M4 6h5l6 8M8 16v-4h3v4M12 16v-6h3v6" fill="none" stroke="#c9c7ba" stroke-width="1.200"/><path d="M3 3h4v3h-4zM9 3h3v3h-3z" fill="none" stroke="#c9c7ba" stroke-width=".9"/></svg>
<div style="left:1070.5px;top:334px;width:43.5px;height:23px;background:#ece9d8;border:1px solid;border-color:#fff #716f64 #716f64 #fff;box-sizing:border-box;box-shadow:inset -1px -1px 0 #aca899;"></div>
<div style="left:1072px;top:336px;width:29px;height:19px;background:#aca899;"></div>
<div style="left:1087px;top:344px;width:3px;height:3px;background:#fff;border:1px solid #000;box-sizing:border-box;width:4px;height:4px;"></div>
<svg style="left:1103.5px;top:343.5px;" width="8" height="5" viewBox="0 0 8 5"><path d="M0 0h8l-4 4.500z" fill="#000"/></svg>
<div style="left:532px;top:368.5px;width:581px;height:183px;background:#fff;border:1px solid;border-color:#7b7a6c #fff #fff #7b7a6c;box-sizing:border-box;box-shadow:inset 1px 1px 0 #a8a695;"></div>
<div style="left:908px;top:371px;width:185px;height:32px;background:#a0a0a0;"></div>
<svg style="left:900px;top:368px" width="200" height="40" viewBox="900 368 200 40"><text x="909.700" y="397" font-size="27" textLength="182" lengthAdjust="spacingAndGlyphs" fill="#000">&lt;Blattnummer&gt;</text></svg>
<div style="left:1093px;top:384px;width:1px;height:17px;background:#000;"></div>
<div style="left:1095px;top:370px;width:17px;height:163px;background:linear-gradient(90deg,#f3f1ec,#fefefb);"></div>
<div style="left:1096px;top:371px;width:15px;height:15px;background:#f6f5ef;border:1px solid #e4e2d8;border-radius:2px;box-sizing:border-box;"></div>
<svg style="left:1099px;top:375.5px;" width="9" height="6" viewBox="0 0 9 6"><path d="M1 4.500l3.500-3.500 3.500 3.500" fill="none" stroke="#c9c7ba" stroke-width="2"/></svg>
<div style="left:1096px;top:517.5px;width:15px;height:15px;background:#f6f5ef;border:1px solid #e4e2d8;border-radius:2px;box-sizing:border-box;"></div>
<svg style="left:1099px;top:522px;" width="9" height="6" viewBox="0 0 9 6"><path d="M1 1l3.500 3.500 3.500-3.500" fill="none" stroke="#c9c7ba" stroke-width="2"/></svg>
<div style="left:1095px;top:533px;width:17px;height:17.5px;background:#f1efe2;"></div>
<div style="left:534px;top:533.5px;width:561px;height:16.5px;background:linear-gradient(#f3f1ec,#fefefb);"></div>
<div style="left:535px;top:535px;width:15.5px;height:14px;background:linear-gradient(135deg,#cddcfc,#b8ccf6);border:1px solid #dfe8fd;border-radius:2px;box-sizing:border-box;"></div>
<svg style="left:539px;top:538.5px;" width="6" height="8" viewBox="0 0 6 8"><path d="M5 1l-3.500 3 3.500 3" fill="none" stroke="#4d6185" stroke-width="2"/></svg>
<div style="left:858px;top:534.5px;width:219px;height:14px;background:linear-gradient(#c9d9fc,#bccefa 60%,#b5c8f7);border:1px solid #e2eafd;border-radius:2px;box-sizing:border-box;"></div>
<svg style="left:963px;top:538px;" width="8" height="7" viewBox="0 0 8 7"><path d="M.5 0v7M2.500 0v7M4.500 0v7M6.500 0v7" stroke="#eef3fe" stroke-width="1"/><path d="M1.500 0v7M3.500 0v7M5.500 0v7M7.500 0v7" stroke="#8ca3d6" stroke-width="1"/></svg>
<div style="left:1078.5px;top:535px;width:15.5px;height:14px;background:linear-gradient(135deg,#cddcfc,#b8ccf6);border:1px solid #dfe8fd;border-radius:2px;box-sizing:border-box;"></div>
<svg style="left:1083.5px;top:538.5px;" width="6" height="8" viewBox="0 0 6 8"><path d="M1 1l3.500 3-3.500 3" fill="none" stroke="#4d6185" stroke-width="2"/></svg>
<div style="left:533px;top:566px;width:22px;height:21px;background:linear-gradient(#fff 0,#f6f8fc 50%,#dde6f4 100%);border:1px solid #2f4f7a;border-radius:3px;box-sizing:border-box;"></div>
<svg style="left:536.5px;top:569px;" width="15" height="15" viewBox="0 0 15 15"><path d="M.6 .6h13.300v10.400h-2.900v3l-3-3h-7.400z" fill="#ffffe1" stroke="#000" stroke-width="1.100"/><text x="7.200" y="9.600" font-size="11" font-weight="bold" text-anchor="middle" fill="#00007b" stroke="#00007b" stroke-width=".4">?</text></svg>
<div style="left:840px;top:566px;width:22px;height:21px;background:linear-gradient(#fff 0,#f6f8fc 50%,#dde6f4 100%);border:1px solid #2f4f7a;border-radius:3px;box-sizing:border-box;"></div>
<div style="left:872px;top:566px;width:22px;height:21px;background:linear-gradient(#fff 0,#f6f8fc 50%,#dde6f4 100%);border:1px solid #2f4f7a;border-radius:3px;box-sizing:border-box;"></div>
<svg style="left:840px;top:566px;" width="22" height="21" viewBox="0 0 22 21"><path d="M11 3l4.500 5h-3v6.500h1.500l-3 3.500-3-3.500h1.500v-6.500h-3z" fill="#000"/></svg>
<svg style="left:872px;top:566px;" width="22" height="21" viewBox="0 0 22 21"><path d="M11 18l4.500-5h-3v-6.500h1.500l-3-3.500-3 3.500h1.500v6.500h-3z" fill="#000"/></svg>
<div style="left:959px;top:566px;width:73px;height:21px;background:linear-gradient(#fff 0,#f4f6fb 60%,#e0e8f5 100%);border:1px solid #1e3c78;border-radius:3px;box-sizing:border-box;box-shadow:inset 0 0 0 2px #a9c2f0;"></div>
<span class="t" style="left:987.5px;top:568.80px;font-size:11px;line-height:15px;color:#000;letter-spacing:-0.893px;">OK</span>
<div style="left:1040px;top:566px;width:73px;height:21px;background:linear-gradient(#fff 0,#f8f6ee 60%,#ece6d4 100%);border:1px solid #1e3c78;border-radius:3px;box-sizing:border-box;box-shadow:inset 0 0 0 2px #f6c45c;"></div>
<span class="t" style="left:1050px;top:568.80px;font-size:11px;line-height:15px;color:#000;letter-spacing:-0.276px;">Abbrechen</span>
<svg style="left:1115px;top:582px;" width="13" height="13" viewBox="0 0 13 13"><path d="M12 2l-10 10M12 6l-6 6M12 10l-2 2" stroke="#b8b4a0" stroke-width="1.200"/><path d="M13 3l-10 10M13 7l-6 6M13 11l-2 2" stroke="#fff" stroke-width="1"/></svg>
<!-- bottom -->
<div style="left:0px;top:846px;width:1440px;height:20px;background:linear-gradient(#f1f1ec 0,#fff 1px,#fefefd 4px,#f0efeb 7px,#dcdbd4 11px,#c8c7bf 15px,#b6b4aa 19px,#b0aea2 20px);"></div>
<span class="t" style="left:1.5px;top:850.80px;font-size:11px;line-height:15px;color:#000;letter-spacing:-0.203px;">Drücken Sie F1, um Hilfe zu erhalten.</span>
<span class="t" style="left:1061.5px;top:850.80px;font-size:11px;line-height:15px;color:#000;letter-spacing:-0.173px;">16 Bemaßungen oder Abhängigkeiten erforderlich</span>
<div style="left:1301px;top:850px;width:1px;height:14px;background:#c5c2b0;border-right:1px solid #fff;"></div>
<div style="left:1338px;top:850px;width:1px;height:14px;background:#c5c2b0;border-right:1px solid #fff;"></div>
<div style="left:1376px;top:850px;width:1px;height:14px;background:#c5c2b0;border-right:1px solid #fff;"></div>
<span class="t" style="left:1309px;top:850.80px;font-size:11px;line-height:15px;color:#000;">0</span>
<span class="t" style="left:1347px;top:850.80px;font-size:11px;line-height:15px;color:#000;">1</span>
<div style="left:1380px;top:850px;width:36px;height:14px;background:linear-gradient(#3a3a3a,#0a0a0a);"></div>
<div style="left:1380px;top:850px;width:8.5px;height:14px;background:linear-gradient(#18e018,#00a000);"></div>
<svg style="left:1421px;top:849px;" width="14" height="16" viewBox="0 0 14 16"><path d="M2 2q8 0 9 9q-8 1-9-9z" fill="#c8d4ee" stroke="#4a5f9a" stroke-width="1"/><path d="M7 10l-2 4h6" fill="none" stroke="#4a5f9a" stroke-width="1.200"/><path d="M7 6l4-4" stroke="#4a5f9a" stroke-width="1"/></svg>
<div style="left:0px;top:866px;width:1440px;height:34px;background:linear-gradient(#2562cc 0,#3b86e9 1px,#3a84ea 3px,#2a6fe0 4px,#2460d2 5px,#468ef4 6px,#3d84f0 7px,#2866dc 8px,#245edc 12px,#2562df 26px,#2157d0 30px,#1d4fbf 34px);"></div>
<div style="left:0px;top:870px;width:97px;height:30px;background:linear-gradient(#5aa85a 0,#47a347 3px,#3c9a3c 8px,#3a983a 20px,#2f862f 27px,#277527 30px);border-radius:0 10px 12px 0/0 14px 16px 0;box-shadow:inset -3px 0 4px -1px #1f5f1f,inset 0 2px 2px #7fc47f;"></div>
<svg style="left:10px;top:875px;" width="19" height="18" viewBox="0 0 19 18"><g transform="translate(-.5 -1.500) scale(1.120)"><path d="M2 3.500q3.500-2 7 0l-1.200 5q-3.500-2-7 0z" fill="#e8592a"/><path d="M10.500 3.800q3.500 2 7 0l-1.200 5q-3.500 2-7 0z" fill="#7dc440"/><path d="M.7 9.700q3.500-2 7 0l-1.200 5q-3.500-2-7 0z" fill="#4a86e8"/><path d="M9.200 10q3.500 2 7 0l-1.200 5q-3.500 2-7 0z" fill="#f5c42c"/></g></svg>
<span class="t" style="left:35px;top:875.30px;font-size:17px;line-height:21px;color:#fff;letter-spacing:0.067px;font-weight:bold;font-style:italic;text-shadow:1px 1px 1px #1f4f1f;">Start</span>
<svg style="left:108px;top:875px;" width="5" height="20" viewBox="0 0 5 20"><rect x="0" y="0" width="2" height="2" fill="#14409f"/><rect x="3" y="2" width="2" height="2" fill="#14409f"/><rect x="0" y="4" width="2" height="2" fill="#14409f"/><rect x="3" y="6" width="2" height="2" fill="#14409f"/><rect x="0" y="8" width="2" height="2" fill="#14409f"/><rect x="3" y="10" width="2" height="2" fill="#14409f"/><rect x="0" y="12" width="2" height="2" fill="#14409f"/><rect x="3" y="14" width="2" height="2" fill="#14409f"/><rect x="0" y="16" width="2" height="2" fill="#14409f"/><rect x="3" y="18" width="2" height="2" fill="#14409f"/></svg>
<svg style="left:376px;top:875px;" width="5" height="20" viewBox="0 0 5 20"><rect x="0" y="0" width="2" height="2" fill="#14409f"/><rect x="3" y="2" width="2" height="2" fill="#14409f"/><rect x="0" y="4" width="2" height="2" fill="#14409f"/><rect x="3" y="6" width="2" height="2" fill="#14409f"/><rect x="0" y="8" width="2" height="2" fill="#14409f"/><rect x="3" y="10" width="2" height="2" fill="#14409f"/><rect x="0" y="12" width="2" height="2" fill="#14409f"/><rect x="3" y="14" width="2" height="2" fill="#14409f"/><rect x="0" y="16" width="2" height="2" fill="#14409f"/><rect x="3" y="18" width="2" height="2" fill="#14409f"/></svg>
<svg style="left:1039px;top:875px;" width="5" height="20" viewBox="0 0 5 20"><rect x="0" y="0" width="2" height="2" fill="#14409f"/><rect x="3" y="2" width="2" height="2" fill="#14409f"/><rect x="0" y="4" width="2" height="2" fill="#14409f"/><rect x="3" y="6" width="2" height="2" fill="#14409f"/><rect x="0" y="8" width="2" height="2" fill="#14409f"/><rect x="3" y="10" width="2" height="2" fill="#14409f"/><rect x="0" y="12" width="2" height="2" fill="#14409f"/><rect x="3" y="14" width="2" height="2" fill="#14409f"/><rect x="0" y="16" width="2" height="2" fill="#14409f"/><rect x="3" y="18" width="2" height="2" fill="#14409f"/></svg>
<svg style="left:1069px;top:875px;" width="5" height="20" viewBox="0 0 5 20"><rect x="0" y="0" width="2" height="2" fill="#14409f"/><rect x="3" y="2" width="2" height="2" fill="#14409f"/><rect x="0" y="4" width="2" height="2" fill="#14409f"/><rect x="3" y="6" width="2" height="2" fill="#14409f"/><rect x="0" y="8" width="2" height="2" fill="#14409f"/><rect x="3" y="10" width="2" height="2" fill="#14409f"/><rect x="0" y="12" width="2" height="2" fill="#14409f"/><rect x="3" y="14" width="2" height="2" fill="#14409f"/><rect x="0" y="16" width="2" height="2" fill="#14409f"/><rect x="3" y="18" width="2" height="2" fill="#14409f"/></svg>
<svg style="left:121px;top:877px;" width="16" height="16" viewBox="0 0 16 16"><rect x="1" y="2" width="13" height="12" rx="3" fill="#eaf2ff" stroke="#2a58b0" stroke-width="1.200"/><path d="M4 10l4-5 2 3 3-4" fill="none" stroke="#2a58b0" stroke-width="1.500"/><path d="M9 3l5 1-3 4z" fill="#f0f6ff" stroke="#2a58b0" stroke-width=".8"/></svg>
<svg style="left:144px;top:877px;" width="16" height="16" viewBox="0 0 16 16"><rect x=".5" y=".5" width="15" height="15" fill="#fbe3ee" stroke="#e08ab0" stroke-width="1"/><circle cx="10" cy="6" r="3.500" fill="#d85a8a" stroke="#9a2a5a" stroke-width=".8"/><path d="M8 8l-5 5" stroke="#9a2a5a" stroke-width="2.200"/></svg>
<svg style="left:167px;top:877px;" width="16" height="16" viewBox="0 0 16 16"><rect x=".5" y=".5" width="15" height="15" fill="#eef8e6" stroke="#7ab060" stroke-width="1"/><path d="M3 4l9 9M12 4l-9 9" stroke="#1f7a2a" stroke-width="2.600"/></svg>
<svg style="left:190px;top:877px;" width="16" height="16" viewBox="0 0 16 16"><rect x=".5" y=".5" width="15" height="15" fill="#fbe3a8" stroke="#e09a28" stroke-width="1"/><circle cx="8" cy="8" r="5" fill="#fff8e6" stroke="#c87a10" stroke-width="1.200"/><path d="M8 5v3.500h3" fill="none" stroke="#c87a10" stroke-width="1.200"/></svg>
<svg style="left:213px;top:877px;" width="17" height="16" viewBox="0 0 17 16"><path d="M.5 3h5l1.500 2h8.500v9h-15z" fill="#e8c25a" stroke="#a07a1a" stroke-width="1"/><path d="M2.500 7h14l-2 7h-14z" fill="#f8e09a" stroke="#a07a1a" stroke-width="1"/><circle cx="9" cy="7" r="3.500" fill="#dff0ff" stroke="#6a8ab0" stroke-width="1"/></svg>
<svg style="left:236px;top:877px;" width="16" height="16" viewBox="0 0 16 16"><path d="M3.500 8.700h8.800a4.500 4.500 0 1 0-1.300 3.300" fill="none" stroke="#a8d8ff" stroke-width="3.600"/><path d="M3.500 8.700h8.800a4.500 4.500 0 1 0-1.300 3.300" fill="none" stroke="#2f8ae8" stroke-width="2.200"/><path d="M1.500 13q-2-3 5-8.500 5-3.500 8-2.500" fill="none" stroke="#f0b830" stroke-width="1.500"/></svg>
<svg style="left:261px;top:877px;" width="12" height="16" viewBox="0 0 12 16"><rect x=".5" y=".5" width="11" height="15" rx="1" fill="#b8c8e8" stroke="#6a82b8" stroke-width="1"/><rect x="2" y="2" width="8" height="3" fill="#eaf0fa"/><path d="M2.500 7.500h7M2.500 10h7M2.500 12.500h7" stroke="#6a82b8" stroke-width="1.400" stroke-dasharray="1.700 1"/></svg>
<svg style="left:283px;top:877px;" width="16" height="16" viewBox="0 0 16 16"><rect x=".5" y=".5" width="15" height="15" fill="#dfe8fb" stroke="#8aa0d8" stroke-width="1"/><path d="M2.500 4l2.500 8 3-6 3 6 2.500-8" fill="none" stroke="#2a4a9a" stroke-width="2"/></svg>
<svg style="left:305px;top:878px;" width="17" height="14" viewBox="0 0 17 14"><ellipse cx="8.500" cy="7" rx="7" ry="4.500" fill="none" stroke="#f0c820" stroke-width="3"/><path d="M3 5q5 4 11 4" fill="none" stroke="#2a2a10" stroke-width="1.400"/></svg>
<svg style="left:328px;top:877px;" width="16" height="16" viewBox="0 0 16 16"><rect x=".5" y="5.500" width="15" height="10" fill="#fdfdf3" stroke="#c9c4a8" stroke-width="1"/><path d="M2.500 .5h5v2.500h-1v3h2v2h-7v-2h2v-3h-1z" fill="#e2a93a" stroke="#7a4a0a" stroke-width=".8"/></svg>
<span class="t" style="left:361px;top:872.30px;font-size:13px;line-height:17px;color:#dfe9fc;">»</span>
<span class="t" style="left:1126.5px;top:872.30px;font-size:13px;line-height:17px;color:#dfe9fc;">»</span>
<div style="left:386.7px;top:874px;width:126.6px;height:22px;background:linear-gradient(#5a9ffa 0,#4690f6 2px,#3f86f2 12px,#3879ea 19px,#306ddc 22px);border-radius:3px;box-shadow:inset 1px 0 0 #6aa4fa,inset -1px 0 0 #2a5cc0;"></div>
<svg style="left:396.7px;top:877px;" width="16" height="16" viewBox="0 0 16 16"><rect x=".5" y=".5" width="15" height="15" fill="#fbe3a8" stroke="#e09a28" stroke-width="1"/><circle cx="8" cy="8" r="5" fill="#fff8e6" stroke="#c87a10" stroke-width="1.200"/><path d="M8 5v3.500h3" fill="none" stroke="#c87a10" stroke-width="1.200"/></svg>
<span class="t" style="left:415.5px;top:877.80px;font-size:11px;line-height:15px;color:#fff;letter-spacing:-0.038px;">Posteingang - ...</span>
<div style="left:515.7px;top:874px;width:126.6px;height:22px;background:linear-gradient(#5a9ffa 0,#4690f6 2px,#3f86f2 12px,#3879ea 19px,#306ddc 22px);border-radius:3px;box-shadow:inset 1px 0 0 #6aa4fa,inset -1px 0 0 #2a5cc0;"></div>
<svg style="left:525.7px;top:877px;" width="16" height="16" viewBox="0 0 16 16"><path d="M3.500 8.700h8.800a4.500 4.500 0 1 0-1.300 3.300" fill="none" stroke="#a8d8ff" stroke-width="3.600"/><path d="M3.500 8.700h8.800a4.500 4.500 0 1 0-1.300 3.300" fill="none" stroke="#2f8ae8" stroke-width="2.200"/><path d="M1.500 13q-2-3 5-8.500 5-3.500 8-2.500" fill="none" stroke="#f0b830" stroke-width="1.500"/></svg>
<span class="t" style="left:544.5px;top:877.80px;font-size:11px;line-height:15px;color:#fff;letter-spacing:-0.002px;">Foren auf CAD...</span>
<div style="left:644.6px;top:874px;width:126.6px;height:22px;background:linear-gradient(#5a9ffa 0,#4690f6 2px,#3f86f2 12px,#3879ea 19px,#306ddc 22px);border-radius:3px;box-shadow:inset 1px 0 0 #6aa4fa,inset -1px 0 0 #2a5cc0;"></div>
<svg style="left:654.6px;top:877px;" width="16" height="16" viewBox="0 0 16 16"><path d="M3.500 8.700h8.800a4.500 4.500 0 1 0-1.300 3.300" fill="none" stroke="#a8d8ff" stroke-width="3.600"/><path d="M3.500 8.700h8.800a4.500 4.500 0 1 0-1.300 3.300" fill="none" stroke="#2f8ae8" stroke-width="2.200"/><path d="M1.500 13q-2-3 5-8.500 5-3.500 8-2.500" fill="none" stroke="#f0b830" stroke-width="1.500"/></svg>
<span class="t" style="left:673.7px;top:877.80px;font-size:11px;line-height:15px;color:#fff;letter-spacing:-0.011px;">Stile im Schriftf...</span>
<div style="left:773.5px;top:874px;width:126.6px;height:22px;background:linear-gradient(#5a9ffa 0,#4690f6 2px,#3f86f2 12px,#3879ea 19px,#306ddc 22px);border-radius:3px;box-shadow:inset 1px 0 0 #6aa4fa,inset -1px 0 0 #2a5cc0;"></div>
<svg style="left:783.5px;top:877px;" width="16" height="16" viewBox="0 0 16 16"><path d="M3.500 8.700h8.800a4.500 4.500 0 1 0-1.300 3.300" fill="none" stroke="#a8d8ff" stroke-width="3.600"/><path d="M3.500 8.700h8.800a4.500 4.500 0 1 0-1.300 3.300" fill="none" stroke="#2f8ae8" stroke-width="2.200"/><path d="M1.500 13q-2-3 5-8.500 5-3.500 8-2.500" fill="none" stroke="#f0b830" stroke-width="1.500"/></svg>
<span class="t" style="left:802.7px;top:877.80px;font-size:11px;line-height:15px;color:#fff;letter-spacing:-0.023px;">Stil Standardno...</span>
<div style="left:902.5px;top:874px;width:129px;height:22px;background:linear-gradient(#183f9a 0,#1c4eb4 3px,#1e52b8 12px,#2058c2 22px);border-radius:3px;box-shadow:inset 1px 1px 1px #12327a;"></div>
<svg style="left:913px;top:878px;" width="16" height="16" viewBox="0 0 16 16"><rect x=".5" y="5.500" width="15" height="10" fill="#fdfdf3" stroke="#c9c4a8" stroke-width="1"/><path d="M2.500 .5h5v2.500h-1v3h2v2h-7v-2h2v-3h-1z" fill="#e2a93a" stroke="#7a4a0a" stroke-width=".8"/></svg>
<span class="t" style="left:933px;top:877.80px;font-size:11px;line-height:15px;color:#fff;letter-spacing:0.141px;">Autodesk Inve...</span>
<svg style="left:1052.5px;top:878px;" width="13" height="15" viewBox="0 0 13 15"><path d="M.6 .6h11.800v10.400h-2.400v3l-3-3h-6.400z" fill="#ffffe1" stroke="#000" stroke-width="1.100"/><text x="6.500" y="9.300" font-size="10" font-weight="bold" text-anchor="middle" fill="#000">?</text></svg>
<span class="t" style="left:1079.5px;top:877.80px;font-size:11px;line-height:15px;color:#9fbbf0;letter-spacing:-0.226px;">Desktop</span>
<div style="left:1149px;top:866px;width:291px;height:34px;background:linear-gradient(#1a7ad8 0,#37a8f5 2px,#1c98ee 5px,#1590e9 10px,#1791ea 24px,#158ae0 29px,#0f72c8 34px);border-left:1px solid #0e4aa8;box-shadow:inset 2px 0 2px #3aaaf6;box-sizing:border-box;"></div>
<svg style="left:1159px;top:877px;" width="16" height="16" viewBox="0 0 16 16"><rect x="1.500" y="3.500" width="13" height="9" fill="#f8dc78" stroke="#c89a28" stroke-width="1"/><path d="M1.500 3.500l6.500 5 6.500-5" fill="none" stroke="#c89a28" stroke-width="1"/></svg>
<svg style="left:1177px;top:877px;" width="16" height="16" viewBox="0 0 16 16"><rect x="6" y="1" width="9" height="7" fill="#2a3a8a" stroke="#aab4d8" stroke-width="1"/><rect x="1" y="5" width="9" height="7" fill="#34449a" stroke="#aab4d8" stroke-width="1"/><path d="M3 14h6M9 10h5" stroke="#c8d0e8" stroke-width="1.400"/></svg>
<svg style="left:1196px;top:877px;" width="16" height="16" viewBox="0 0 16 16"><path d="M8 .8l6 2v5q0 5-6 7.500q-6-2.500-6-7.500v-5z" fill="#f4cf2a" stroke="#8a6a0a" stroke-width="1"/><path d="M8 4v5M8 10.500v1.800" stroke="#3a2a00" stroke-width="1.700"/></svg>
<svg style="left:1214px;top:877px;" width="16" height="16" viewBox="0 0 16 16"><rect x=".5" y=".5" width="15" height="15" fill="#fbe3a8" stroke="#e09a28" stroke-width="1"/><circle cx="8" cy="8" r="5" fill="#fff8e6" stroke="#c87a10" stroke-width="1.200"/><path d="M8 5v3.500h3" fill="none" stroke="#c87a10" stroke-width="1.200"/></svg>
<svg style="left:1232px;top:877px;" width="16" height="16" viewBox="0 0 16 16"><circle cx="6" cy="6" r="4.500" fill="#8a8a92" stroke="#4a4a52" stroke-width="1"/><circle cx="11" cy="10.500" r="4" fill="#e83a2a" stroke="#fff" stroke-width="1"/><path d="M8.500 10.500h5" stroke="#fff" stroke-width="1.600"/></svg>
<svg style="left:1250px;top:877px;" width="16" height="16" viewBox="0 0 16 16"><path d="M2 9l8-3 5 3-8 5z" fill="#8a9aa8" stroke="#3a4a58" stroke-width="1"/><path d="M4 6l4-5 4 4h-2.500v3h-3v-3z" fill="#2ab83a" stroke="#0a6a1a" stroke-width=".8"/></svg>
<svg style="left:1268px;top:877px;" width="16" height="16" viewBox="0 0 16 16"><path d="M2 2q1 8 8 9" fill="none" stroke="#f4f4f4" stroke-width="1.800"/><path d="M7 9l6 2-1 3.500-6-2z" fill="#e8e8e8" stroke="#333" stroke-width="1"/><rect x="11" y="11" width="4" height="3" fill="#d8c020" stroke="#333" stroke-width=".7"/></svg>
<svg style="left:1286px;top:877px;" width="16" height="16" viewBox="0 0 16 16"><path d="M1 2h6.500v6h-6.500z" fill="#8ac43a"/><path d="M8.500 2h6.500v6h-6.500z" fill="#2a58c8"/><path d="M1 9h6.500v6h-6.500z" fill="#4aa82a"/><path d="M8.500 9h6.500v6q-6.500 1-6.500-6z" fill="#d83a2a"/><path d="M1 2h6v5h-6z" fill="#f4d23a" opacity=".7"/></svg>
<svg style="left:1304px;top:877px;" width="16" height="16" viewBox="0 0 16 16"><rect x="3" y="2" width="10" height="12" fill="#d8d8d0" opacity=".6"/><path d="M2.500 3l11 10M13.500 3l-11 10" stroke="#e8281a" stroke-width="2.800"/></svg>
<svg style="left:1322px;top:877px;" width="16" height="16" viewBox="0 0 16 16"><rect x="2" y="1.500" width="12" height="13" fill="#0a5a0a" stroke="#0a3a0a" stroke-width="1"/><path d="M2 5h12M2 8h12M2 11h12M5 1.500v10M8 1.500v10M11 1.500v10" stroke="#2a9a2a" stroke-width=".8"/><rect x="2" y="12" width="12" height="2.500" fill="#fff"/></svg>
<svg style="left:1340px;top:877px;" width="16" height="16" viewBox="0 0 16 16"><rect x=".5" y=".5" width="15" height="15" fill="#a98ad0" stroke="#e8e0f4" stroke-width="1"/><circle cx="6.500" cy="8" r="4" fill="#f4f0fa" stroke="#5a3a8a" stroke-width="1"/><path d="M10 3l4 1-3 9" fill="none" stroke="#5a3a8a" stroke-width="1.200"/></svg>
<svg style="left:1357px;top:879px;" width="18" height="12" viewBox="0 0 18 12"><rect x=".5" y="1" width="17" height="10" rx="2" fill="#d8201a"/><text x="9" y="9.500" font-size="9" font-weight="bold" font-style="italic" fill="#fff" text-anchor="middle" textLength="14" lengthAdjust="spacingAndGlyphs">ATI</text></svg>
<svg style="left:1376px;top:877px;" width="16" height="16" viewBox="0 0 16 16"><rect x="0" y="0" width="16" height="16" fill="#0a1a7a"/><circle cx="8" cy="8" r="2" fill="#f4e03a"/><path d="M4.500 4q-3 4 0 8M11.500 4q3 4 0 8" fill="none" stroke="#f4e03a" stroke-width="1.200"/><path d="M2.500 2.500q-3 5.500 0 11M13.500 2.500q3 5.500 0 11" fill="none" stroke="#f4f4f4" stroke-width="1"/></svg>
<span class="t" style="left:1399.5px;top:876.80px;font-size:11px;line-height:15px;color:#fff;letter-spacing:-0.257px;">12:17</span>
</div>
</body></html>
